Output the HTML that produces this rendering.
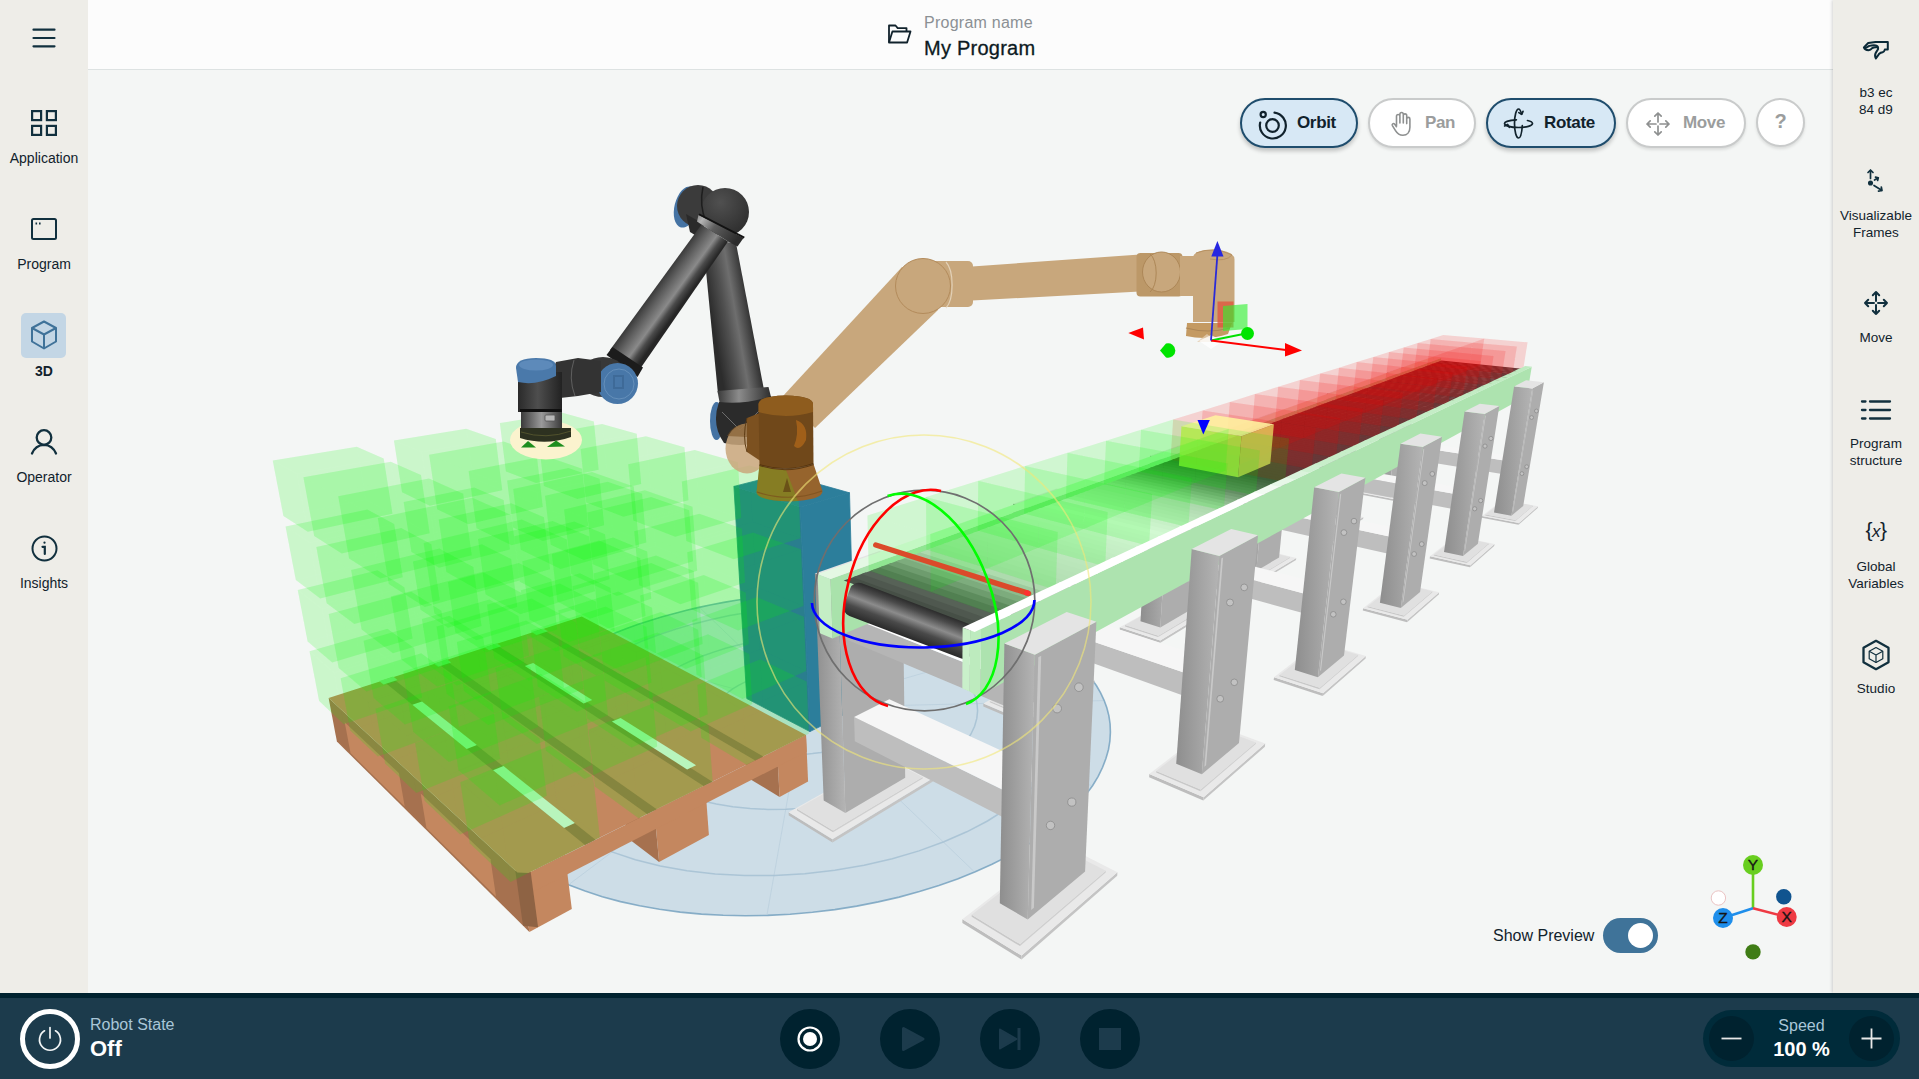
<!DOCTYPE html>
<html lang="en"><head><meta charset="utf-8"><title>My Program - 3D</title>
<style>
*{box-sizing:border-box;margin:0;padding:0}
html,body{width:1919px;height:1079px;overflow:hidden;background:#F4F6F5;font-family:"Liberation Sans",sans-serif;color:#11222C}
#app{position:relative;width:1919px;height:1079px;overflow:hidden}
#left{position:absolute;left:0;top:0;width:88px;height:993px;background:#EEEDE8}
#right{position:absolute;left:1833px;top:0;width:86px;height:993px;background:#EEEDE8;box-shadow:-1px 0 3px rgba(0,0,0,.16)}
#head{position:absolute;left:88px;top:0;width:1745px;height:70px;background:#FCFCFC;border-bottom:1px solid #DDE2E2}
#view{position:absolute;left:88px;top:70px;width:1745px;height:923px;background:#F4F6F5;overflow:hidden}
#bot{position:absolute;left:0;top:993px;width:1919px;height:86px;background:#1C3B4C;border-top:5px solid #00222F}
.nav{position:absolute;left:0;width:88px;text-align:center;font-size:14px;line-height:16px;color:#11222C}
.nav svg{display:block;margin:0 auto}
.rnav{position:absolute;left:0;width:86px;text-align:center;font-size:13.5px;line-height:16.5px;color:#11222C}
.ic{position:absolute}
.btn{position:absolute;top:28px;height:50px;border-radius:25px;border:2px solid #C9CBCB;background:#fff;font-weight:bold;font-size:17px;letter-spacing:-.35px;color:#9B9D9D;box-shadow:0 2px 3px rgba(0,0,0,.10)}
.btn.on{background:#D7E8F5;border-color:#1F4D6D;color:#11222C;box-shadow:0 3px 4px rgba(0,0,0,.22)}
.btn span{position:absolute;top:13px;line-height:20px}
.btn svg{position:absolute}
.cbtn{position:absolute;top:11px;width:60px;height:60px;border-radius:30px;background:#00222F}
</style></head><body><div id="app">
<div id="view">
<svg id="scene" style="position:absolute;left:0;top:0" width="1745" height="923" viewBox="0 0 1745 923"><defs>
<linearGradient id="gLegL" x1="0" x2="1" y1="0" y2="0"><stop offset="0" stop-color="#8E8E8E"/><stop offset="1" stop-color="#B4B4B4"/></linearGradient>
<linearGradient id="gBelt" gradientUnits="userSpaceOnUse" x1="770" y1="520" x2="1000" y2="560"><stop offset="0" stop-color="#4C7C4C"/><stop offset=".55" stop-color="#8EBB8E"/><stop offset="1" stop-color="#3E6E3E"/></linearGradient>
<linearGradient id="gRoll" x1="0" x2="0" y1="0" y2="1"><stop offset="0" stop-color="#2C2C2C"/><stop offset=".18" stop-color="#4A4A4A"/><stop offset=".45" stop-color="#8C8C8C"/><stop offset=".7" stop-color="#4A4A4A"/><stop offset="1" stop-color="#2A2A2A"/></linearGradient>
<linearGradient id="gTubeF" gradientUnits="userSpaceOnUse" x1="655.700" y1="287.200" x2="681" y2="305.500"><stop offset="0" stop-color="#3A3A3A"/><stop offset=".3" stop-color="#626262"/><stop offset=".62" stop-color="#8A8A8A"/><stop offset=".8" stop-color="#4A4A4A"/><stop offset="1" stop-color="#262626"/></linearGradient>
<linearGradient id="gTubeU" gradientUnits="userSpaceOnUse" x1="712" y1="320" x2="752" y2="313"><stop offset="0" stop-color="#2C2C2C"/><stop offset=".35" stop-color="#505050"/><stop offset=".6" stop-color="#6E6E6E"/><stop offset="1" stop-color="#2A2A2A"/></linearGradient>
<linearGradient id="gCollar" x1="0" x2="1" y1="0" y2="0"><stop offset="0" stop-color="#3A3A3A"/><stop offset=".4" stop-color="#8C8C8C"/><stop offset="1" stop-color="#2E2E2E"/></linearGradient>
<linearGradient id="gCollar2" x1="0" x2="1" y1="0" y2=".5"><stop offset="0" stop-color="#8A8A8A"/><stop offset=".15" stop-color="#B5B5B5"/><stop offset=".45" stop-color="#5E5E5E"/><stop offset="1" stop-color="#2C2C2C"/></linearGradient>
<radialGradient id="gJoint" cx=".4" cy=".3" r=".8"><stop offset="0" stop-color="#505050"/><stop offset="1" stop-color="#2B2B2B"/></radialGradient>
<linearGradient id="gCylH" x1="0" x2="1" y1="0" y2="0"><stop offset="0" stop-color="#2A2A2A"/><stop offset=".45" stop-color="#4E4E4E"/><stop offset=".7" stop-color="#3A3A3A"/><stop offset="1" stop-color="#222"/></linearGradient>
<linearGradient id="gCylS" x1="0" x2="1" y1="0" y2="0"><stop offset="0" stop-color="#3A3A3A"/><stop offset=".5" stop-color="#9A9A9A"/><stop offset="1" stop-color="#3A3A3A"/></linearGradient>
<linearGradient id="gLegR" x1="0" x2="1" y1="0" y2="0"><stop offset="0" stop-color="#A2A2A2"/><stop offset="1" stop-color="#B2B2B2"/></linearGradient>
</defs>
<polygon points="908.3,547.1 898.0,543.7 887.5,540.5 876.8,537.6 865.9,535.0 854.7,532.6 843.4,530.5 831.9,528.6 820.3,527.0 808.5,525.7 796.6,524.5 784.6,523.7 772.5,523.1 760.3,522.7 748.0,522.5 735.7,522.7 723.3,523.0 710.8,523.6 698.3,524.5 685.8,525.6 673.3,526.9 660.8,528.5 648.2,530.3 635.8,532.4 623.3,534.8 610.9,537.4 598.6,540.3 586.4,543.4 574.2,546.8 562.2,550.4 550.3,554.3 538.6,558.5 527.1,562.9 515.7,567.7 504.6,572.6 493.8,577.9 483.2,583.4 473.0,589.3 463.1,595.3 453.6,601.7 444.4,608.3 435.8,615.2 427.6,622.3 420.0,629.7 413.0,637.3 406.6,645.2 400.8,653.3 395.8,661.6 391.6,670.1 388.2,678.7 385.6,687.6 384.0,696.5 383.4,705.6 383.8,714.7 385.2,723.8 387.8,733.0 391.6,742.1 396.5,751.2 402.7,760.1 410.1,768.9 418.8,777.4 428.7,785.7 439.9,793.6 452.4,801.2 466.1,808.3 481.1,815.0 497.1,821.1 514.3,826.7 532.5,831.6 551.6,835.8 571.5,839.3 592.2,842.1 613.4,844.1 635.2,845.3 657.3,845.8 679.7,845.4 702.1,844.2 724.5,842.3 746.8,839.6 768.7,836.1 790.2,831.9 811.1,827.1 831.4,821.6 850.9,815.5 869.5,808.9 887.3,801.8 904.0,794.3 919.7,786.4 934.3,778.1 947.8,769.6 960.2,760.9 971.4,752.0 981.4,742.9 990.3,733.8 998.0,724.6 1004.7,715.5 1010.2,706.3 1014.6,697.3 1018.0,688.3 1020.5,679.5 1021.9,670.8 1022.4,662.3 1022.1,654.0 1020.9,645.9 1018.9,638.0 1016.1,630.3 1012.6,622.9 1008.5,615.8 1003.7,608.9 998.2,602.2 992.3,595.9 985.8,589.8 978.8,583.9 971.3,578.4 963.4,573.1 955.1,568.1 946.4,563.3 937.3,558.9 927.9,554.7 918.2,550.7" fill="rgba(150,186,212,0.42)" stroke="#6F9DBD" stroke-width="1.6" stroke-opacity=".8"/><polygon points="779.9,607.5 774.7,605.3 769.1,603.4 763.2,601.8 756.9,600.5 750.4,599.4 743.7,598.6 736.8,598.0 729.8,597.8 722.6,597.8 715.5,598.1 708.3,598.7 701.1,599.5 694.0,600.7 687.0,602.1 680.2,603.7 673.6,605.6 667.3,607.8 661.2,610.2 655.4,612.8 650.1,615.6 645.1,618.7 640.6,621.9 636.6,625.2 633.2,628.7 630.3,632.4 628.0,636.1 626.4,639.8 625.4,643.7 625.1,647.5 625.5,651.3 626.7,655.1 628.5,658.7 631.1,662.3 634.4,665.7 638.3,668.9 643.0,671.9 648.3,674.7 654.2,677.1 660.6,679.3 667.6,681.1 675.0,682.6 682.7,683.8 690.8,684.5 699.1,684.9 707.5,684.9 716.0,684.4 724.5,683.6 732.9,682.4 741.1,680.9 749.0,679.0 756.6,676.8 763.8,674.3 770.5,671.5 776.8,668.4 782.4,665.2 787.5,661.8 791.9,658.2 795.7,654.5 798.8,650.7 801.2,646.9 802.9,643.1 804.0,639.3 804.3,635.5 804.0,631.8 803.0,628.2 801.4,624.7 799.2,621.4 796.4,618.2 793.0,615.2 789.1,612.4 784.7,609.8" fill="none" stroke="#8FB1C8" stroke-width="1.5" stroke-opacity=".55"/><polygon points="835.1,581.5 825.0,577.8 814.3,574.5 803.0,571.7 791.4,569.4 779.3,567.5 766.9,566.1 754.3,565.2 741.4,564.7 728.4,564.8 715.2,565.3 702.1,566.3 688.9,567.7 675.9,569.7 662.9,572.1 650.2,575.0 637.7,578.3 625.6,582.1 613.8,586.3 602.6,591.0 591.9,596.1 581.8,601.6 572.5,607.5 563.9,613.8 556.3,620.4 549.6,627.3 544.0,634.5 539.5,642.0 536.3,649.6 534.4,657.3 533.9,665.2 534.9,673.0 537.4,680.7 541.4,688.4 547.0,695.7 554.3,702.8 563.1,709.5 573.4,715.7 585.2,721.4 598.4,726.4 612.8,730.6 628.3,734.1 644.8,736.8 662.1,738.5 679.9,739.4 698.1,739.3 716.4,738.3 734.6,736.4 752.5,733.7 769.9,730.0 786.6,725.7 802.3,720.6 817.1,714.8 830.7,708.5 843.0,701.8 853.9,694.7 863.4,687.2 871.4,679.6 878.0,671.8 883.0,664.0 886.6,656.2 888.8,648.4 889.6,640.8 889.0,633.4 887.2,626.3 884.2,619.4 880.0,612.8 874.8,606.6 868.5,600.8 861.4,595.3 853.4,590.3 844.6,585.7" fill="none" stroke="#8FB1C8" stroke-width="1.5" stroke-opacity=".55"/><polygon points="884.7,558.2 869.8,553.2 854.3,548.8 838.2,545.1 821.6,542.0 804.6,539.6 787.2,537.8 769.5,536.6 751.5,536.0 733.3,536.0 715.1,536.7 696.7,538.0 678.3,539.9 659.9,542.5 641.6,545.6 623.5,549.4 605.6,553.9 588.1,559.0 570.9,564.7 554.2,571.0 538.1,578.1 522.7,585.7 508.1,594.0 494.4,602.9 481.8,612.3 470.4,622.4 460.4,633.0 451.9,644.1 445.1,655.6 440.2,667.5 437.4,679.7 436.7,692.1 438.4,704.6 442.7,717.1 449.5,729.3 459.1,741.2 471.4,752.6 486.5,763.4 504.2,773.3 524.6,782.1 547.4,789.7 572.3,796.0 599.0,800.8 627.3,804.1 656.6,805.6 686.6,805.5 716.8,803.7 746.8,800.2 776.1,795.2 804.3,788.7 831.0,780.9 855.9,771.8 878.8,761.8 899.5,751.0 917.8,739.5 933.5,727.5 946.8,715.2 957.5,702.8 965.7,690.3 971.6,677.9 975.1,665.8 976.4,653.9 975.7,642.4 973.1,631.4 968.7,620.9 962.6,610.9 955.0,601.5 946.0,592.7 935.8,584.5 924.5,577.0 912.1,570.1 898.8,563.8" fill="none" stroke="#8FB1C8" stroke-width="1.5" stroke-opacity=".55"/><path d="M763.3 601.9L854.6 533.1" stroke="#A9C3D4" stroke-width="1" stroke-opacity=".4"/><path d="M722.8 597.8L736.0 523.0" stroke="#A9C3D4" stroke-width="1" stroke-opacity=".4"/><path d="M680.4 603.7L611.7 537.6" stroke="#A9C3D4" stroke-width="1" stroke-opacity=".4"/><path d="M645.2 618.6L495.0 577.9" stroke="#A9C3D4" stroke-width="1" stroke-opacity=".4"/><path d="M626.4 639.8L408.1 644.9" stroke="#A9C3D4" stroke-width="1" stroke-opacity=".4"/><path d="M631.0 662.2L389.3 732.2" stroke="#A9C3D4" stroke-width="1" stroke-opacity=".4"/><path d="M660.5 679.3L481.8 813.8" stroke="#A9C3D4" stroke-width="1" stroke-opacity=".4"/><path d="M707.4 684.9L679.1 844.2" stroke="#A9C3D4" stroke-width="1" stroke-opacity=".4"/><path d="M756.4 676.8L885.7 801.2" stroke="#A9C3D4" stroke-width="1" stroke-opacity=".4"/><path d="M791.9 658.3L1003.1 715.4" stroke="#A9C3D4" stroke-width="1" stroke-opacity=".4"/><path d="M804.3 635.6L1015.0 630.6" stroke="#A9C3D4" stroke-width="1" stroke-opacity=".4"/><path d="M793.1 615.3L954.5 568.5" stroke="#A9C3D4" stroke-width="1" stroke-opacity=".4"/>
<polygon points="645.9,416.4 712.4,436.9 721.9,661.6 658.8,628.6" fill="#2A7E8E" stroke="#2A7E8E" stroke-width=".8"/><polygon points="712.4,436.9 761.5,422.8 767.5,639.0 721.9,661.6" fill="#2C7E9B" stroke="#2C7E9B" stroke-width=".8"/><polygon points="645.9,416.4 694.7,404.0 761.5,422.8 712.4,436.9" fill="#2C7E9B" stroke="#2C7E9B" stroke-width=".8"/>
<polygon points="1272.7,422.8 1305.2,429.0 1305.0,430.8 1272.5,424.6" fill="#BDBDBD" /><polygon points="1305.2,429.0 1329.0,414.6 1328.8,416.3 1305.0,430.8" fill="#C4C4C4" /><polygon points="1272.7,422.8 1297.5,409.0 1329.0,414.6 1305.2,429.0" fill="#E9E9E9" /><polygon points="1276.1,421.5 1302.8,426.5 1302.7,427.4 1276.0,422.4" fill="#C8C8C8" /><polygon points="1302.8,426.5 1324.1,413.8 1324.0,414.7 1302.7,427.4" fill="#CFCFCF" /><polygon points="1276.1,421.5 1298.1,409.1 1324.1,413.8 1302.8,426.5" fill="#E0E0E0" /><polygon points="1299.4,302.2 1316.1,304.1 1300.9,422.8 1284.9,419.8" fill="url(#gLegL)" /><polygon points="1316.1,304.1 1330.6,298.8 1315.3,414.3 1300.9,422.8" fill="#ADADAD" /><polygon points="1299.4,302.2 1314.2,297.0 1330.6,298.8 1316.1,304.1" fill="#E4E4E4" /><polygon points="1309.6,374.0 1416.2,390.6 1414.1,404.1 1308.0,386.7" fill="#BEBEBE" /><polygon points="1309.6,374.0 1317.9,369.9 1423.1,385.9 1416.2,390.6" fill="#F6F6F6" /><polygon points="1210.9,457.3 1245.8,465.0 1245.6,467.0 1210.7,459.3" fill="#BDBDBD" /><polygon points="1245.8,465.0 1275.3,447.1 1275.1,449.0 1245.6,467.0" fill="#C4C4C4" /><polygon points="1210.9,457.3 1241.5,440.2 1275.3,447.1 1245.8,465.0" fill="#E9E9E9" /><polygon points="1214.7,455.8 1243.4,462.1 1243.3,463.1 1214.6,456.8" fill="#C8C8C8" /><polygon points="1243.4,462.1 1269.9,446.3 1269.8,447.2 1243.3,463.1" fill="#CFCFCF" /><polygon points="1214.7,455.8 1242.0,440.5 1269.9,446.3 1243.4,462.1" fill="#E0E0E0" /><polygon points="1239.0,323.5 1257.0,325.8 1242.2,457.4 1225.1,453.7" fill="url(#gLegL)" /><polygon points="1257.0,325.8 1275.1,319.2 1260.1,446.8 1242.2,457.4" fill="#ADADAD" /><polygon points="1239.0,323.5 1257.5,317.0 1275.1,319.2 1257.0,325.8" fill="#E4E4E4" /><polygon points="1251.4,403.3 1367.0,424.1 1364.8,439.1 1249.8,417.3" fill="#BEBEBE" /><polygon points="1251.4,403.3 1261.7,398.1 1375.7,418.2 1367.0,424.1" fill="#F6F6F6" /><polygon points="1133.0,500.8 1170.6,510.7 1170.3,512.9 1132.8,503.0" fill="#BDBDBD" /><polygon points="1170.6,510.7 1208.2,487.9 1208.0,490.0 1170.3,512.9" fill="#C4C4C4" /><polygon points="1133.0,500.8 1171.9,479.1 1208.2,487.9 1170.6,510.7" fill="#E9E9E9" /><polygon points="1137.4,499.0 1168.3,507.1 1168.2,508.2 1137.3,500.1" fill="#C8C8C8" /><polygon points="1168.3,507.1 1202.0,486.9 1201.9,488.0 1168.2,508.2" fill="#CFCFCF" /><polygon points="1137.4,499.0 1172.0,479.7 1202.0,486.9 1168.3,507.1" fill="#E0E0E0" /><polygon points="1162.4,350.4 1181.8,353.4 1168.3,500.9 1149.8,496.2" fill="url(#gLegL)" /><polygon points="1181.8,353.4 1205.0,344.9 1191.1,487.5 1168.3,500.9" fill="#ADADAD" /><polygon points="1162.4,350.4 1186.0,342.1 1205.0,344.9 1181.8,353.4" fill="#E4E4E4" /><polygon points="1177.9,440.2 1303.7,467.1 1301.5,484.0 1176.5,455.9" fill="#BEBEBE" /><polygon points="1177.9,440.2 1191.0,433.6 1315.1,459.4 1303.7,467.1" fill="#F6F6F6" /><polygon points="1031.9,557.3 1072.2,570.4 1072.0,572.9 1031.7,559.7" fill="#BDBDBD" /><polygon points="1072.2,570.4 1121.8,540.3 1121.6,542.7 1072.0,572.9" fill="#C4C4C4" /><polygon points="1031.9,557.3 1082.8,528.9 1121.8,540.3 1072.2,570.4" fill="#E9E9E9" /><polygon points="1037.2,555.1 1070.3,565.8 1070.2,567.1 1037.1,556.4" fill="#C8C8C8" /><polygon points="1070.3,565.8 1114.7,539.2 1114.6,540.4 1070.2,567.1" fill="#CFCFCF" /><polygon points="1037.2,555.1 1082.5,529.8 1114.7,539.2 1070.3,565.8" fill="#E0E0E0" /><polygon points="1062.1,385.7 1083.1,389.7 1072.3,557.5 1052.5,551.3" fill="url(#gLegL)" /><polygon points="1083.1,389.7 1114.0,378.3 1102.2,539.9 1072.3,557.5" fill="#ADADAD" /><polygon points="1062.1,385.7 1093.5,374.6 1114.0,378.3 1083.1,389.7" fill="#E4E4E4" /><polygon points="1082.2,488.3 1219.5,524.4 1217.4,543.8 1081.0,506.1" fill="#BEBEBE" /><polygon points="1082.2,488.3 1099.5,479.6 1234.9,513.9 1219.5,524.4" fill="#F6F6F6" /><polygon points="895.3,633.5 938.0,651.7 938.0,654.7 895.3,636.4" fill="#BDBDBD" /><polygon points="938.0,651.7 1006.5,610.2 1006.4,612.9 938.0,654.7" fill="#C4C4C4" /><polygon points="895.3,633.5 964.8,594.7 1006.5,610.2 938.0,651.7" fill="#E9E9E9" /><polygon points="901.8,630.9 936.9,645.7 936.9,647.1 901.8,632.3" fill="#C8C8C8" /><polygon points="936.9,645.7 998.1,609.0 998.0,610.4 936.9,647.1" fill="#CFCFCF" /><polygon points="901.8,630.9 963.7,596.2 998.1,609.0 936.9,645.7" fill="#E0E0E0" /><polygon points="925.2,433.8 947.5,439.5 942.5,634.0 921.5,625.4" fill="url(#gLegL)" /><polygon points="947.5,439.5 990.7,423.6 983.5,609.8 942.5,634.0" fill="#ADADAD" /><polygon points="925.2,433.8 968.7,418.5 990.7,423.6 947.5,439.5" fill="#E4E4E4" /><polygon points="952.3,553.5 1101.6,604.6 1099.9,627.2 951.7,574.1" fill="#BEBEBE" /><polygon points="952.3,553.5 976.2,541.5 1123.6,589.6 1101.6,604.6" fill="#F6F6F6" /><polygon points="700.6,742.2 744.4,769.2 744.5,772.6 700.8,745.6" fill="#BDBDBD" /><polygon points="744.4,769.2 844.9,708.3 844.9,711.4 744.5,772.6" fill="#C4C4C4" /><polygon points="700.6,742.2 801.2,686.1 844.9,708.3 744.4,769.2" fill="#E9E9E9" /><polygon points="709.0,738.8 745.0,760.6 745.1,762.3 709.0,740.4" fill="#C8C8C8" /><polygon points="745.0,760.6 834.6,707.0 834.6,708.6 745.1,762.3" fill="#CFCFCF" /><polygon points="709.0,738.8 798.7,688.6 834.6,707.0 745.0,760.6" fill="#E0E0E0" /><polygon points="726.9,503.6 750.0,512.1 757.4,743.1 735.7,730.5" fill="url(#gLegL)" /><polygon points="750.0,512.1 814.4,488.4 817.2,707.8 757.4,743.1" fill="#ADADAD" /><polygon points="726.9,503.6 791.4,480.9 814.4,488.4 750.0,512.1" fill="#E4E4E4" /><polygon points="766.1,647.0 924.9,724.7 924.4,751.9 766.8,671.3" fill="#BEBEBE" /><polygon points="766.1,647.0 801.3,629.3 959.1,701.5 924.9,724.7" fill="#F6F6F6" />
<polygon points="756.5,544.9 921.0,610.3 920.5,637.6 757.3,569.1" fill="#B5B5B5" /><polygon points="756.5,544.9 778.6,536.1 942.5,598.5 921.0,610.3" fill="#FFFFFF" /><polygon points="729.6,504.1 742.5,508.9 744.6,568.6 731.8,563.2" fill="#C4EEC5" /><polygon points="742.5,508.9 1353.2,287.9 1349.4,315.4 744.6,568.6" fill="#A9E2AB" /><polygon points="729.6,504.1 1344.3,287.0 1353.2,287.9 742.5,508.9" fill="#E4F8E4" /><polygon points="755.7,510.6 768.6,505.9 900.0,552.8 887.3,558.7" fill="rgb(70,79,70)" /><polygon points="764.8,507.3 777.4,502.6 908.6,548.6 896.3,554.5" fill="rgb(79,88,79)" /><polygon points="773.7,504.0 786.2,499.4 917.2,544.6 905.0,550.4" fill="rgb(87,98,87)" /><polygon points="782.5,500.7 794.7,496.3 925.5,540.7 913.6,546.3" fill="rgb(96,107,96)" /><polygon points="791.2,497.6 803.2,493.1 933.7,536.8 922.1,542.3" fill="rgb(110,122,110)" /><polygon points="799.6,494.4 811.5,490.1 941.8,533.0 930.3,538.4" fill="rgb(129,140,129)" /><polygon points="808.0,491.4 819.6,487.1 949.7,529.2 938.5,534.6" fill="rgb(147,159,147)" /><polygon points="816.2,488.3 827.6,484.1 957.5,525.6 946.4,530.8" fill="rgb(166,177,166)" /><polygon points="824.3,485.4 835.5,481.2 965.1,522.0 954.3,527.1" fill="rgb(185,195,185)" /><polygon points="832.2,482.4 843.3,478.4 972.6,518.4 961.9,523.5" fill="rgb(204,214,204)" /><polygon points="840.1,479.6 851.0,475.6 980.0,514.9 969.5,519.9" fill="rgb(207,217,207)" /><polygon points="847.8,476.7 858.5,472.8 987.2,511.5 976.9,516.4" fill="rgb(209,219,209)" /><polygon points="855.3,473.9 865.9,470.1 994.3,508.1 984.2,512.9" fill="rgb(212,221,212)" /><polygon points="862.8,471.2 873.2,467.4 1001.3,504.8 991.4,509.5" fill="rgb(214,222,214)" /><polygon points="870.2,468.5 880.4,464.7 1008.2,501.6 998.4,506.2" fill="rgb(216,224,216)" /><polygon points="877.4,465.8 887.5,462.1 1015.0,498.4 1005.3,503.0" fill="rgb(218,226,218)" /><polygon points="884.5,463.2 894.4,459.6 1021.6,495.3 1012.1,499.7" fill="rgb(221,228,221)" /><polygon points="891.5,460.6 901.3,457.0 1028.1,492.2 1018.8,496.6" fill="rgb(223,230,223)" /><polygon points="898.4,458.1 908.1,454.5 1034.6,489.1 1025.4,493.5" fill="rgb(225,232,225)" /><polygon points="905.2,455.6 914.7,452.1 1040.9,486.2 1031.9,490.4" fill="rgb(227,234,227)" /><polygon points="911.9,453.1 921.3,449.7 1047.1,483.2 1038.2,487.4" fill="rgb(230,236,230)" /><polygon points="918.5,450.7 927.8,447.3 1053.2,480.3 1044.5,484.4" fill="rgb(232,237,232)" /><polygon points="925.1,448.3 934.1,445.0 1059.2,477.5 1050.7,481.5" fill="rgb(234,239,234)" /><polygon points="931.5,445.9 940.4,442.6 1065.2,474.7 1056.7,478.7" fill="rgb(237,241,237)" /><polygon points="937.8,443.6 946.6,440.4 1071.0,471.9 1062.7,475.8" fill="rgb(239,243,239)" /><polygon points="944.0,441.3 952.7,438.1 1076.7,469.2 1068.6,473.1" fill="rgb(241,245,241)" /><polygon points="950.2,439.0 958.7,435.9 1082.4,466.5 1074.3,470.3" fill="rgb(243,247,243)" /><polygon points="956.2,436.8 964.7,433.7 1088.0,463.9 1080.0,467.6" fill="rgb(246,249,246)" /><polygon points="962.2,434.6 970.5,431.6 1093.4,461.3 1085.6,465.0" fill="rgb(242,246,242)" /><polygon points="968.1,432.5 976.3,429.4 1098.8,458.8 1091.2,462.4" fill="rgb(238,242,238)" /><polygon points="973.9,430.3 982.0,427.3 1104.2,456.2 1096.6,459.8" fill="rgb(234,238,234)" /><polygon points="979.6,428.2 987.6,425.3 1109.4,453.8 1102.0,457.3" fill="rgb(229,234,229)" /><polygon points="985.3,426.1 993.2,423.2 1114.6,451.3 1107.2,454.8" fill="rgb(225,230,225)" /><polygon points="990.9,424.1 998.6,421.2 1119.7,448.9 1112.4,452.3" fill="rgb(220,226,220)" /><polygon points="996.4,422.0 1004.0,419.2 1124.7,446.6 1117.5,449.9" fill="rgb(216,222,216)" /><polygon points="1001.8,420.1 1009.4,417.3 1129.6,444.2 1122.6,447.5" fill="rgb(212,218,212)" /><polygon points="1007.1,418.1 1014.6,415.3 1134.5,441.9 1127.6,445.2" fill="rgb(207,215,207)" /><polygon points="1012.4,416.1 1019.8,413.4 1139.3,439.6 1132.5,442.9" fill="rgb(203,211,203)" /><polygon points="1017.6,414.2 1024.9,411.5 1144.0,437.4 1137.3,440.6" fill="rgb(196,204,196)" /><polygon points="1022.8,412.3 1030.0,409.7 1148.7,435.2 1142.1,438.3" fill="rgb(183,190,183)" /><polygon points="1027.9,410.5 1035.0,407.8 1153.3,433.0 1146.8,436.1" fill="rgb(170,177,170)" /><polygon points="1032.9,408.6 1039.9,406.0 1157.8,430.9 1151.4,433.9" fill="rgb(157,164,157)" /><polygon points="1037.8,406.8 1044.8,404.2 1162.3,428.8 1156.0,431.8" fill="rgb(144,151,144)" /><polygon points="1042.7,405.0 1049.6,402.5 1166.7,426.7 1160.5,429.6" fill="rgb(131,138,131)" /><polygon points="1047.6,403.2 1054.3,400.7 1171.1,424.6 1164.9,427.5" fill="rgb(118,124,118)" /><polygon points="1052.3,401.5 1059.0,399.0 1175.4,422.6 1169.3,425.5" fill="rgb(108,113,108)" /><polygon points="1057.0,399.7 1063.6,397.3 1179.6,420.6 1173.6,423.4" fill="rgb(101,106,101)" /><polygon points="1061.7,398.0 1068.2,395.6 1183.8,418.6 1177.9,421.4" fill="rgb(95,99,94)" /><polygon points="1066.3,396.3 1072.7,394.0 1188.0,416.6 1182.1,419.4" fill="rgb(89,92,87)" /><polygon points="1070.8,394.6 1077.2,392.3 1192.0,414.7 1186.2,417.5" fill="rgb(83,85,80)" /><polygon points="1075.3,393.0 1081.6,390.7 1196.1,412.8 1190.3,415.5" fill="rgb(76,78,73)" /><polygon points="1079.7,391.4 1085.9,389.1 1200.0,410.9 1194.4,413.6" fill="rgb(70,70,66)" /><polygon points="1084.1,389.8 1090.2,387.5 1203.9,409.1 1198.4,411.7" fill="rgb(66,66,62)" /><polygon points="1088.4,388.2 1094.5,385.9 1207.8,407.3 1202.3,409.9" fill="rgb(68,66,63)" /><polygon points="1092.7,386.6 1098.7,384.4 1211.6,405.5 1206.2,408.0" fill="rgb(69,66,63)" /><polygon points="1096.9,385.0 1102.8,382.9 1215.4,403.7 1210.0,406.2" fill="rgb(70,66,63)" /><polygon points="1101.1,383.5 1106.9,381.4 1219.1,401.9 1213.8,404.4" fill="rgb(71,66,64)" /><polygon points="1105.2,382.0 1111.0,379.9 1222.8,400.2 1217.6,402.6" fill="rgb(72,66,64)" /><polygon points="1109.3,380.5 1115.0,378.4 1226.4,398.5 1221.3,400.9" fill="rgb(73,66,64)" /><polygon points="1113.3,379.0 1119.0,376.9 1230.0,396.8 1224.9,399.2" fill="rgb(74,66,65)" /><polygon points="1117.3,377.5 1122.9,375.5 1233.6,395.1 1228.5,397.5" fill="rgb(76,66,65)" /><polygon points="1121.2,376.1 1126.8,374.1 1237.1,393.4 1232.1,395.8" fill="rgb(77,66,66)" /><polygon points="1125.1,374.7 1130.6,372.6 1240.5,391.8 1235.6,394.1" fill="rgb(78,66,66)" /><polygon points="1129.0,373.2 1134.4,371.3 1244.0,390.2 1239.1,392.5" fill="rgb(78,66,66)" /><polygon points="1132.8,371.8 1138.1,369.9 1247.3,388.6 1242.5,390.9" fill="rgb(78,66,66)" /><polygon points="1136.6,370.4 1141.8,368.5 1250.7,387.0 1245.9,389.3" fill="rgb(78,66,66)" /><polygon points="1140.3,369.1 1145.5,367.2 1254.0,385.4 1249.3,387.7" fill="rgb(78,66,66)" /><polygon points="1144.0,367.7 1149.1,365.8 1257.2,383.9 1252.6,386.1" fill="rgb(78,66,66)" /><polygon points="1147.6,366.4 1152.7,364.5 1260.5,382.4 1255.9,384.6" fill="rgb(78,66,66)" /><polygon points="1151.2,365.1 1156.3,363.2 1263.6,380.9 1259.1,383.0" fill="rgb(78,66,66)" /><polygon points="1154.8,363.7 1159.8,361.9 1266.8,379.4 1262.3,381.5" fill="rgb(78,66,66)" /><polygon points="1158.3,362.4 1163.2,360.6 1269.9,377.9 1265.5,380.0" fill="rgb(78,66,66)" /><polygon points="1161.8,361.2 1166.7,359.4 1273.0,376.5 1268.6,378.5" fill="rgb(78,66,66)" /><polygon points="1165.2,359.9 1170.1,358.1 1276.0,375.0 1271.7,377.1" fill="rgb(79,66,66)" /><polygon points="1168.7,358.6 1173.4,356.9 1279.0,373.6 1274.8,375.6" fill="rgb(79,66,66)" /><polygon points="1172.0,357.4 1176.8,355.7 1282.0,372.2 1277.8,374.2" fill="rgb(79,66,66)" /><polygon points="1175.4,356.2 1180.1,354.4 1284.9,370.8 1280.8,372.8" fill="rgb(79,66,66)" /><polygon points="1178.7,354.9 1183.3,353.2 1287.9,369.4 1283.7,371.4" fill="rgb(79,66,66)" /><polygon points="1182.0,353.7 1186.5,352.1 1290.7,368.1 1286.6,370.0" fill="rgb(79,66,66)" /><polygon points="1185.2,352.5 1189.7,350.9 1293.6,366.7 1289.5,368.6" fill="rgb(79,66,66)" /><polygon points="1188.4,351.4 1192.9,349.7 1296.4,365.4 1292.4,367.3" fill="rgb(79,66,66)" /><polygon points="1191.6,350.2 1196.0,348.6 1299.2,364.1 1295.2,366.0" fill="rgb(79,66,66)" /><polygon points="1194.7,349.0 1199.1,347.4 1301.9,362.8 1298.0,364.6" fill="rgb(79,66,66)" /><polygon points="1197.8,347.9 1202.2,346.3 1304.7,361.5 1300.8,363.3" fill="rgb(79,66,66)" /><polygon points="1200.9,346.8 1205.2,345.2 1307.3,360.2 1303.5,362.0" fill="rgb(79,66,66)" /><polygon points="1204.0,345.6 1208.2,344.1 1310.0,359.0 1306.2,360.8" fill="rgb(79,66,66)" /><polygon points="1207.0,344.5 1211.2,343.0 1312.7,357.7 1308.9,359.5" fill="rgb(79,66,66)" /><polygon points="1210.0,343.4 1214.2,341.9 1315.3,356.5 1311.5,358.2" fill="rgb(79,66,66)" /><polygon points="1212.9,342.3 1217.1,340.8 1317.8,355.3 1314.2,357.0" fill="rgb(79,66,66)" /><polygon points="1215.9,341.3 1220.0,339.8 1320.4,354.1 1316.8,355.8" fill="rgb(79,66,66)" /><polygon points="1218.8,340.2 1222.8,338.7 1322.9,352.9 1319.3,354.6" fill="rgb(79,66,66)" /><polygon points="1221.6,339.1 1225.7,337.7 1325.4,351.7 1321.9,353.4" fill="rgb(79,66,66)" /><polygon points="1224.5,338.1 1228.5,336.6 1327.9,350.5 1324.4,352.2" fill="rgb(79,66,66)" /><polygon points="1227.3,337.1 1231.2,335.6 1330.4,349.3 1326.9,351.0" fill="rgb(79,66,66)" /><polygon points="1230.1,336.0 1234.0,334.6 1332.8,348.2 1329.3,349.8" fill="rgb(79,66,66)" /><polygon points="1232.8,335.0 1236.7,333.6 1335.2,347.1 1331.8,348.7" fill="rgb(80,66,66)" /><polygon points="1235.6,334.0 1239.4,332.6 1337.6,345.9 1334.2,347.5" fill="rgb(80,66,66)" /><polygon points="1238.3,333.0 1242.1,331.6 1339.9,344.8 1336.6,346.4" fill="rgb(80,66,66)" /><polygon points="1241.0,332.0 1244.8,330.6 1342.3,343.7 1339.0,345.3" fill="rgb(80,66,66)" /><polygon points="1243.6,331.0 1247.4,329.7 1344.6,342.6 1341.3,344.2" fill="rgb(80,66,66)" /><polygon points="1246.3,330.1 1250.0,328.7 1346.9,341.6 1343.6,343.1" fill="rgb(80,66,66)" /><polygon points="1248.9,329.1 1252.6,327.8 1349.1,340.5 1345.9,342.0" fill="rgb(80,66,66)" /><polygon points="1251.5,328.2 1255.1,326.8 1351.4,339.4 1348.2,340.9" fill="rgb(80,66,66)" /><polygon points="1254.1,327.2 1257.6,325.9 1353.6,338.4 1350.4,339.9" fill="rgb(80,66,66)" /><polygon points="1256.6,326.3 1260.2,325.0 1355.8,337.3 1352.7,338.8" fill="rgb(80,66,66)" /><polygon points="1259.1,325.3 1262.6,324.0 1358.0,336.3 1354.9,337.8" fill="rgb(80,66,66)" /><polygon points="1261.6,324.4 1265.1,323.1 1360.1,335.3 1357.1,336.7" fill="rgb(80,66,66)" /><polygon points="1264.1,323.5 1267.5,322.2 1362.3,334.3 1359.2,335.7" fill="rgb(80,66,66)" /><polygon points="1266.5,322.6 1270.0,321.4 1364.4,333.3 1361.4,334.7" fill="rgb(80,66,66)" /><polygon points="1269.0,321.7 1272.4,320.5 1366.5,332.3 1363.5,333.7" fill="rgb(80,66,66)" /><polygon points="1271.4,320.8 1274.7,319.6 1368.6,331.3 1365.6,332.7" fill="rgb(80,66,66)" /><polygon points="1273.8,320.0 1277.1,318.7 1370.6,330.3 1367.7,331.7" fill="rgb(80,66,66)" /><polygon points="1276.1,319.1 1279.4,317.9 1372.7,329.4 1369.8,330.7" fill="rgb(80,66,66)" /><polygon points="1278.5,318.2 1281.8,317.0 1374.7,328.4 1371.8,329.8" fill="rgb(80,66,66)" /><polygon points="1280.8,317.4 1284.0,316.2 1376.7,327.5 1373.8,328.8" fill="rgb(80,66,66)" /><polygon points="1283.1,316.5 1286.3,315.3 1378.7,326.5 1375.9,327.9" fill="rgb(80,66,66)" /><polygon points="1285.4,315.7 1288.6,314.5 1380.6,325.6 1377.8,326.9" fill="rgb(80,66,66)" /><polygon points="1287.6,314.8 1290.8,313.7 1382.6,324.7 1379.8,326.0" fill="rgb(81,66,66)" /><polygon points="1289.9,314.0 1293.0,312.9 1384.5,323.8 1381.8,325.1" fill="rgb(81,66,66)" /><polygon points="1292.1,313.2 1295.2,312.1 1386.4,322.9 1383.7,324.1" fill="rgb(81,66,66)" /><polygon points="1294.3,312.4 1297.4,311.3 1388.3,322.0 1385.6,323.2" fill="rgb(81,66,66)" /><polygon points="1296.5,311.6 1299.6,310.5 1390.2,321.1 1387.5,322.3" fill="rgb(81,66,66)" /><polygon points="1298.7,310.8 1301.7,309.7 1392.1,320.2 1389.4,321.4" fill="rgb(81,66,66)" /><polygon points="1300.8,310.0 1303.8,308.9 1393.9,319.3 1391.3,320.6" fill="rgb(81,66,66)" /><polygon points="1303.0,309.2 1306.0,308.1 1395.7,318.5 1393.1,319.7" fill="rgb(81,66,66)" /><polygon points="1305.1,308.4 1308.0,307.3 1397.6,317.6 1395.0,318.8" fill="rgb(81,66,66)" /><polygon points="1307.2,307.7 1310.1,306.6 1399.4,316.7 1396.8,318.0" fill="rgb(81,66,66)" /><polygon points="1309.2,306.9 1312.2,305.8 1401.1,315.9 1398.6,317.1" fill="rgb(81,66,66)" /><polygon points="1311.3,306.1 1314.2,305.1 1402.9,315.1 1400.4,316.3" fill="rgb(81,66,66)" /><polygon points="1313.4,305.4 1316.2,304.3 1404.7,314.2 1402.2,315.4" fill="rgb(81,66,66)" /><polygon points="1315.4,304.6 1318.2,303.6 1406.4,313.4 1403.9,314.6" fill="rgb(81,66,66)" /><polygon points="1317.4,303.9 1320.2,302.9 1408.1,312.6 1405.7,313.8" fill="rgb(81,66,66)" /><polygon points="1319.4,303.2 1322.2,302.1 1409.8,311.8 1407.4,312.9" fill="rgb(81,66,66)" /><polygon points="1321.4,302.4 1324.2,301.4 1411.5,311.0 1409.1,312.1" fill="rgb(81,66,66)" /><polygon points="1323.3,301.7 1326.1,300.7 1413.2,310.2 1410.8,311.3" fill="rgb(81,66,66)" /><polygon points="1325.3,301.0 1328.0,300.0 1414.9,309.4 1412.5,310.5" fill="rgb(81,66,66)" /><polygon points="1327.2,300.3 1329.9,299.3 1416.5,308.6 1414.2,309.7" fill="rgb(81,66,66)" /><polygon points="1329.1,299.6 1331.8,298.6 1418.2,307.9 1415.8,309.0" fill="rgb(81,66,66)" /><polygon points="1331.0,298.9 1333.7,297.9 1419.8,307.1 1417.5,308.2" fill="rgb(81,66,66)" /><polygon points="1332.9,298.2 1335.6,297.2 1421.4,306.3 1419.1,307.4" fill="rgb(82,66,66)" /><polygon points="1334.8,297.5 1337.4,296.5 1423.0,305.6 1420.7,306.7" fill="rgb(82,66,66)" /><polygon points="1336.7,296.8 1339.3,295.8 1424.6,304.8 1422.3,305.9" fill="rgb(82,66,66)" /><polygon points="1338.5,296.1 1341.1,295.2 1426.1,304.1 1423.9,305.1" fill="rgb(82,66,66)" /><polygon points="1340.3,295.5 1342.9,294.5 1427.7,303.4 1425.5,304.4" fill="rgb(82,66,66)" /><polygon points="1342.2,294.8 1344.7,293.8 1429.2,302.6 1427.0,303.7" fill="rgb(82,66,66)" /><polygon points="1344.0,294.1 1346.5,293.2 1430.8,301.9 1428.6,302.9" fill="rgb(82,66,66)" /><polygon points="1345.7,293.5 1348.3,292.5 1432.3,301.2 1430.1,302.2" fill="rgb(82,66,66)" /><polygon points="1347.5,292.8 1350.0,291.9 1433.8,300.5 1431.7,301.5" fill="rgb(82,66,66)" /><polygon points="1349.3,292.2 1351.8,291.2 1435.3,299.8 1433.2,300.8" fill="rgb(82,66,66)" /><polygon points="1351.0,291.5 1353.5,290.6 1436.8,299.1 1434.7,300.1" fill="rgb(82,66,66)" /><g transform="translate(762.0,527.6) rotate(20.77)"><rect x="-3" y="-17.5" width="136.9" height="35" rx="9" fill="url(#gRoll)"/></g>
<polygon points="1342.7,268.9 1355.2,265.0 1351.6,291.0 1339.2,295.5" fill="#FF0000" fill-opacity="0.074"/><polygon points="1355.2,265.0 1396.3,268.6 1392.4,295.1 1351.6,291.0" fill="#FF0000" fill-opacity="0.074"/><polygon points="1339.2,295.5 1351.6,291.0 1392.4,295.1 1380.7,299.9" fill="#FF0000" fill-opacity="0.074"/><polygon points="1342.7,268.9 1384.7,272.7 1380.7,299.9 1339.2,295.5" fill="#FF0000" fill-opacity="0.074"/><polygon points="1384.7,272.7 1396.3,268.6 1392.4,295.1 1380.7,299.9" fill="#FF0000" fill-opacity="0.074"/><polygon points="1342.7,268.9 1355.2,265.0 1396.3,268.6 1384.7,272.7" fill="#FF0000" fill-opacity="0.074"/><polygon points="1384.7,272.7 1396.3,268.6 1392.4,295.1 1380.7,299.9" fill="#FF0000" fill-opacity="0.074"/><polygon points="1396.3,268.6 1439.6,272.3 1435.2,299.5 1392.4,295.1" fill="#FF0000" fill-opacity="0.074"/><polygon points="1380.7,299.9 1392.4,295.1 1435.2,299.5 1424.5,304.5" fill="#FF0000" fill-opacity="0.074"/><polygon points="1384.7,272.7 1428.9,276.6 1424.5,304.5 1380.7,299.9" fill="#FF0000" fill-opacity="0.074"/><polygon points="1428.9,276.6 1439.6,272.3 1435.2,299.5 1424.5,304.5" fill="#FF0000" fill-opacity="0.074"/><polygon points="1384.7,272.7 1396.3,268.6 1439.6,272.3 1428.9,276.6" fill="#FF0000" fill-opacity="0.074"/><polygon points="1329.6,273.0 1342.7,268.9 1339.2,295.5 1326.0,300.3" fill="#FF0000" fill-opacity="0.074"/><polygon points="1342.7,268.9 1384.7,272.7 1380.7,299.9 1339.2,295.5" fill="#FF0000" fill-opacity="0.074"/><polygon points="1326.0,300.3 1339.2,295.5 1380.7,299.9 1368.5,305.0" fill="#FF0000" fill-opacity="0.074"/><polygon points="1329.6,273.0 1372.4,277.0 1368.5,305.0 1326.0,300.3" fill="#FF0000" fill-opacity="0.074"/><polygon points="1372.4,277.0 1384.7,272.7 1380.7,299.9 1368.5,305.0" fill="#FF0000" fill-opacity="0.074"/><polygon points="1329.6,273.0 1342.7,268.9 1384.7,272.7 1372.4,277.0" fill="#FF0000" fill-opacity="0.074"/><polygon points="1372.4,277.0 1384.7,272.7 1380.7,299.9 1368.5,305.0" fill="#FF0000" fill-opacity="0.074"/><polygon points="1384.7,272.7 1428.9,276.6 1424.5,304.5 1380.7,299.9" fill="#FF0000" fill-opacity="0.074"/><polygon points="1368.5,305.0 1380.7,299.9 1424.5,304.5 1413.1,309.8" fill="#FF0000" fill-opacity="0.074"/><polygon points="1372.4,277.0 1417.6,281.1 1413.1,309.8 1368.5,305.0" fill="#FF0000" fill-opacity="0.074"/><polygon points="1417.6,281.1 1428.9,276.6 1424.5,304.5 1413.1,309.8" fill="#FF0000" fill-opacity="0.074"/><polygon points="1372.4,277.0 1384.7,272.7 1428.9,276.6 1417.6,281.1" fill="#FF0000" fill-opacity="0.074"/><polygon points="1315.7,277.4 1329.6,273.0 1326.0,300.3 1312.1,305.5" fill="#FF0000" fill-opacity="0.074"/><polygon points="1329.6,273.0 1372.4,277.0 1368.5,305.0 1326.0,300.3" fill="#FF0000" fill-opacity="0.074"/><polygon points="1312.1,305.5 1326.0,300.3 1368.5,305.0 1355.4,310.4" fill="#FF0000" fill-opacity="0.074"/><polygon points="1315.7,277.4 1359.4,281.6 1355.4,310.4 1312.1,305.5" fill="#FF0000" fill-opacity="0.074"/><polygon points="1359.4,281.6 1372.4,277.0 1368.5,305.0 1355.4,310.4" fill="#FF0000" fill-opacity="0.074"/><polygon points="1315.7,277.4 1329.6,273.0 1372.4,277.0 1359.4,281.6" fill="#FF0000" fill-opacity="0.074"/><polygon points="1359.4,281.6 1372.4,277.0 1368.5,305.0 1355.4,310.4" fill="#FF0000" fill-opacity="0.074"/><polygon points="1372.4,277.0 1417.6,281.1 1413.1,309.8 1368.5,305.0" fill="#FF0000" fill-opacity="0.074"/><polygon points="1355.4,310.4 1368.5,305.0 1413.1,309.8 1401.1,315.5" fill="#FF0000" fill-opacity="0.074"/><polygon points="1359.4,281.6 1405.6,286.0 1401.1,315.5 1355.4,310.4" fill="#FF0000" fill-opacity="0.074"/><polygon points="1405.6,286.0 1417.6,281.1 1413.1,309.8 1401.1,315.5" fill="#FF0000" fill-opacity="0.074"/><polygon points="1359.4,281.6 1372.4,277.0 1417.6,281.1 1405.6,286.0" fill="#FF0000" fill-opacity="0.074"/><polygon points="1301.0,282.0 1315.7,277.4 1312.1,305.5 1297.4,310.9" fill="#FF0000" fill-opacity="0.074"/><polygon points="1315.7,277.4 1359.4,281.6 1355.4,310.4 1312.1,305.5" fill="#FF0000" fill-opacity="0.074"/><polygon points="1297.4,310.9 1312.1,305.5 1355.4,310.4 1341.6,316.1" fill="#FF0000" fill-opacity="0.074"/><polygon points="1301.0,282.0 1345.6,286.4 1341.6,316.1 1297.4,310.9" fill="#FF0000" fill-opacity="0.074"/><polygon points="1345.6,286.4 1359.4,281.6 1355.4,310.4 1341.6,316.1" fill="#FF0000" fill-opacity="0.074"/><polygon points="1301.0,282.0 1315.7,277.4 1359.4,281.6 1345.6,286.4" fill="#FF0000" fill-opacity="0.074"/><polygon points="1345.6,286.4 1359.4,281.6 1355.4,310.4 1341.6,316.1" fill="#FF0000" fill-opacity="0.074"/><polygon points="1359.4,281.6 1405.6,286.0 1401.1,315.5 1355.4,310.4" fill="#FF0000" fill-opacity="0.074"/><polygon points="1341.6,316.1 1355.4,310.4 1401.1,315.5 1388.3,321.5" fill="#FF0000" fill-opacity="0.074"/><polygon points="1345.6,286.4 1392.9,291.1 1388.3,321.5 1341.6,316.1" fill="#FF0000" fill-opacity="0.074"/><polygon points="1392.9,291.1 1405.6,286.0 1401.1,315.5 1388.3,321.5" fill="#FF0000" fill-opacity="0.074"/><polygon points="1345.6,286.4 1359.4,281.6 1405.6,286.0 1392.9,291.1" fill="#FF0000" fill-opacity="0.074"/><polygon points="1285.3,286.9 1301.0,282.0 1297.4,310.9 1281.8,316.6" fill="#FF0000" fill-opacity="0.074"/><polygon points="1301.0,282.0 1345.6,286.4 1341.6,316.1 1297.4,310.9" fill="#FF0000" fill-opacity="0.074"/><polygon points="1281.8,316.6 1297.4,310.9 1341.6,316.1 1327.0,322.1" fill="#FF0000" fill-opacity="0.074"/><polygon points="1285.3,286.9 1331.0,291.6 1327.0,322.1 1281.8,316.6" fill="#FF0000" fill-opacity="0.074"/><polygon points="1331.0,291.6 1345.6,286.4 1341.6,316.1 1327.0,322.1" fill="#FF0000" fill-opacity="0.074"/><polygon points="1285.3,286.9 1301.0,282.0 1345.6,286.4 1331.0,291.6" fill="#FF0000" fill-opacity="0.074"/><polygon points="1331.0,291.6 1345.6,286.4 1341.6,316.1 1327.0,322.1" fill="#FF0000" fill-opacity="0.074"/><polygon points="1345.6,286.4 1392.9,291.1 1388.3,321.5 1341.6,316.1" fill="#FF0000" fill-opacity="0.074"/><polygon points="1327.0,322.1 1341.6,316.1 1388.3,321.5 1374.8,328.0" fill="#FF0000" fill-opacity="0.074"/><polygon points="1331.0,291.6 1379.3,296.6 1374.8,328.0 1327.0,322.1" fill="#FF0000" fill-opacity="0.074"/><polygon points="1379.3,296.6 1392.9,291.1 1388.3,321.5 1374.8,328.0" fill="#FF0000" fill-opacity="0.074"/><polygon points="1331.0,291.6 1345.6,286.4 1392.9,291.1 1379.3,296.6" fill="#FF0000" fill-opacity="0.074"/><polygon points="1268.7,292.1 1285.3,286.9 1281.8,316.6 1265.2,322.7" fill="#FF0000" fill-opacity="0.074"/><polygon points="1285.3,286.9 1331.0,291.6 1327.0,322.1 1281.8,316.6" fill="#FF0000" fill-opacity="0.074"/><polygon points="1265.2,322.7 1281.8,316.6 1327.0,322.1 1311.3,328.6" fill="#FF0000" fill-opacity="0.074"/><polygon points="1268.7,292.1 1315.3,297.1 1311.3,328.6 1265.2,322.7" fill="#FF0000" fill-opacity="0.074"/><polygon points="1315.3,297.1 1331.0,291.6 1327.0,322.1 1311.3,328.6" fill="#FF0000" fill-opacity="0.074"/><polygon points="1268.7,292.1 1285.3,286.9 1331.0,291.6 1315.3,297.1" fill="#FF0000" fill-opacity="0.074"/><polygon points="1315.3,297.1 1331.0,291.6 1327.0,322.1 1311.3,328.6" fill="#FF0000" fill-opacity="0.074"/><polygon points="1331.0,291.6 1379.3,296.6 1374.8,328.0 1327.0,322.1" fill="#FF0000" fill-opacity="0.074"/><polygon points="1311.3,328.6 1327.0,322.1 1374.8,328.0 1360.3,334.8" fill="#FF0000" fill-opacity="0.074"/><polygon points="1315.3,297.1 1364.8,302.5 1360.3,334.8 1311.3,328.6" fill="#FF0000" fill-opacity="0.074"/><polygon points="1364.8,302.5 1379.3,296.6 1374.8,328.0 1360.3,334.8" fill="#FF0000" fill-opacity="0.074"/><polygon points="1315.3,297.1 1331.0,291.6 1379.3,296.6 1364.8,302.5" fill="#FF0000" fill-opacity="0.074"/><polygon points="1251.0,297.7 1268.7,292.1 1265.2,322.7 1247.6,329.2" fill="#FF0000" fill-opacity="0.074"/><polygon points="1268.7,292.1 1315.3,297.1 1311.3,328.6 1265.2,322.7" fill="#FF0000" fill-opacity="0.074"/><polygon points="1247.6,329.2 1265.2,322.7 1311.3,328.6 1294.7,335.4" fill="#FF0000" fill-opacity="0.074"/><polygon points="1251.0,297.7 1298.7,303.0 1294.7,335.4 1247.6,329.2" fill="#FF0000" fill-opacity="0.074"/><polygon points="1298.7,303.0 1315.3,297.1 1311.3,328.6 1294.7,335.4" fill="#FF0000" fill-opacity="0.074"/><polygon points="1251.0,297.7 1268.7,292.1 1315.3,297.1 1298.7,303.0" fill="#FF0000" fill-opacity="0.074"/><polygon points="1298.7,303.0 1315.3,297.1 1311.3,328.6 1294.7,335.4" fill="#FF0000" fill-opacity="0.074"/><polygon points="1315.3,297.1 1364.8,302.5 1360.3,334.8 1311.3,328.6" fill="#FF0000" fill-opacity="0.074"/><polygon points="1294.7,335.4 1311.3,328.6 1360.3,334.8 1344.8,342.1" fill="#FF0000" fill-opacity="0.074"/><polygon points="1298.7,303.0 1349.3,308.7 1344.8,342.1 1294.7,335.4" fill="#FF0000" fill-opacity="0.074"/><polygon points="1349.3,308.7 1364.8,302.5 1360.3,334.8 1344.8,342.1" fill="#FF0000" fill-opacity="0.074"/><polygon points="1298.7,303.0 1315.3,297.1 1364.8,302.5 1349.3,308.7" fill="#FF0000" fill-opacity="0.074"/><polygon points="1232.1,303.6 1251.0,297.7 1247.6,329.2 1228.7,336.1" fill="#FF0000" fill-opacity="0.074"/><polygon points="1251.0,297.7 1298.7,303.0 1294.7,335.4 1247.6,329.2" fill="#FF0000" fill-opacity="0.074"/><polygon points="1228.7,336.1 1247.6,329.2 1294.7,335.4 1276.9,342.8" fill="#FF0000" fill-opacity="0.074"/><polygon points="1232.1,303.6 1280.8,309.3 1276.9,342.8 1228.7,336.1" fill="#FF0000" fill-opacity="0.074"/><polygon points="1280.8,309.3 1298.7,303.0 1294.7,335.4 1276.9,342.8" fill="#FF0000" fill-opacity="0.074"/><polygon points="1232.1,303.6 1251.0,297.7 1298.7,303.0 1280.8,309.3" fill="#FF0000" fill-opacity="0.074"/><polygon points="1280.8,309.3 1298.7,303.0 1294.7,335.4 1276.9,342.8" fill="#FF0000" fill-opacity="0.074"/><polygon points="1298.7,303.0 1349.3,308.7 1344.8,342.1 1294.7,335.4" fill="#FF0000" fill-opacity="0.074"/><polygon points="1276.9,342.8 1294.7,335.4 1344.8,342.1 1328.2,349.9" fill="#FF0000" fill-opacity="0.074"/><polygon points="1280.8,309.3 1332.7,315.4 1328.2,349.9 1276.9,342.8" fill="#FF0000" fill-opacity="0.074"/><polygon points="1332.7,315.4 1349.3,308.7 1344.8,342.1 1328.2,349.9" fill="#FF0000" fill-opacity="0.074"/><polygon points="1280.8,309.3 1298.7,303.0 1349.3,308.7 1332.7,315.4" fill="#FF0000" fill-opacity="0.074"/><polygon points="1211.9,309.9 1232.1,303.6 1228.7,336.1 1208.6,343.5" fill="#FF0000" fill-opacity="0.074"/><polygon points="1232.1,303.6 1280.8,309.3 1276.9,342.8 1228.7,336.1" fill="#FF0000" fill-opacity="0.074"/><polygon points="1208.6,343.5 1228.7,336.1 1276.9,342.8 1257.8,350.7" fill="#FF0000" fill-opacity="0.074"/><polygon points="1211.9,309.9 1261.7,316.1 1257.8,350.7 1208.6,343.5" fill="#FF0000" fill-opacity="0.074"/><polygon points="1261.7,316.1 1280.8,309.3 1276.9,342.8 1257.8,350.7" fill="#FF0000" fill-opacity="0.074"/><polygon points="1211.9,309.9 1232.1,303.6 1280.8,309.3 1261.7,316.1" fill="#FF0000" fill-opacity="0.074"/><polygon points="1261.7,316.1 1280.8,309.3 1276.9,342.8 1257.8,350.7" fill="#FF0000" fill-opacity="0.074"/><polygon points="1280.8,309.3 1332.7,315.4 1328.2,349.9 1276.9,342.8" fill="#FF0000" fill-opacity="0.074"/><polygon points="1257.8,350.7 1276.9,342.8 1328.2,349.9 1310.3,358.3" fill="#FF0000" fill-opacity="0.074"/><polygon points="1261.7,316.1 1314.9,322.6 1310.3,358.3 1257.8,350.7" fill="#FF0000" fill-opacity="0.074"/><polygon points="1314.9,322.6 1332.7,315.4 1328.2,349.9 1310.3,358.3" fill="#FF0000" fill-opacity="0.074"/><polygon points="1261.7,316.1 1280.8,309.3 1332.7,315.4 1314.9,322.6" fill="#FF0000" fill-opacity="0.074"/><polygon points="1190.2,316.7 1211.9,309.9 1208.6,343.5 1187.0,351.4" fill="#FF0000" fill-opacity="0.074"/><polygon points="1211.9,309.9 1261.7,316.1 1257.8,350.7 1208.6,343.5" fill="#FF0000" fill-opacity="0.074"/><polygon points="1187.0,351.4 1208.6,343.5 1257.8,350.7 1237.3,359.1" fill="#FF0000" fill-opacity="0.074"/><polygon points="1190.2,316.7 1241.1,323.3 1237.3,359.1 1187.0,351.4" fill="#FF0000" fill-opacity="0.074"/><polygon points="1241.1,323.3 1261.7,316.1 1257.8,350.7 1237.3,359.1" fill="#FF0000" fill-opacity="0.074"/><polygon points="1190.2,316.7 1211.9,309.9 1261.7,316.1 1241.1,323.3" fill="#FF0000" fill-opacity="0.074"/><polygon points="1241.1,323.3 1261.7,316.1 1257.8,350.7 1237.3,359.1" fill="#FF0000" fill-opacity="0.074"/><polygon points="1261.7,316.1 1314.9,322.6 1310.3,358.3 1257.8,350.7" fill="#FF0000" fill-opacity="0.074"/><polygon points="1237.3,359.1 1257.8,350.7 1310.3,358.3 1291.1,367.4" fill="#FF0000" fill-opacity="0.074"/><polygon points="1241.1,323.3 1295.7,330.4 1291.1,367.4 1237.3,359.1" fill="#FF0000" fill-opacity="0.074"/><polygon points="1295.7,330.4 1314.9,322.6 1310.3,358.3 1291.1,367.4" fill="#FF0000" fill-opacity="0.074"/><polygon points="1241.1,323.3 1261.7,316.1 1314.9,322.6 1295.7,330.4" fill="#FF0000" fill-opacity="0.074"/><polygon points="1166.9,324.0 1190.2,316.7 1187.0,351.4 1163.8,359.9" fill="#FF0000" fill-opacity="0.074"/><polygon points="1190.2,316.7 1241.1,323.3 1237.3,359.1 1187.0,351.4" fill="#FF0000" fill-opacity="0.074"/><polygon points="1163.8,359.9 1187.0,351.4 1237.3,359.1 1215.2,368.3" fill="#FF0000" fill-opacity="0.074"/><polygon points="1166.9,324.0 1219.0,331.1 1215.2,368.3 1163.8,359.9" fill="#FF0000" fill-opacity="0.074"/><polygon points="1219.0,331.1 1241.1,323.3 1237.3,359.1 1215.2,368.3" fill="#FF0000" fill-opacity="0.074"/><polygon points="1166.9,324.0 1190.2,316.7 1241.1,323.3 1219.0,331.1" fill="#FF0000" fill-opacity="0.074"/><polygon points="1219.0,331.1 1241.1,323.3 1237.3,359.1 1215.2,368.3" fill="#FF0000" fill-opacity="0.074"/><polygon points="1241.1,323.3 1295.7,330.4 1291.1,367.4 1237.3,359.1" fill="#FF0000" fill-opacity="0.074"/><polygon points="1215.2,368.3 1237.3,359.1 1291.1,367.4 1270.4,377.2" fill="#FF0000" fill-opacity="0.074"/><polygon points="1219.0,331.1 1274.9,338.8 1270.4,377.2 1215.2,368.3" fill="#FF0000" fill-opacity="0.074"/><polygon points="1274.9,338.8 1295.7,330.4 1291.1,367.4 1270.4,377.2" fill="#FF0000" fill-opacity="0.074"/><polygon points="1219.0,331.1 1241.1,323.3 1295.7,330.4 1274.9,338.8" fill="#FF0000" fill-opacity="0.074"/><polygon points="1141.8,331.9 1166.9,324.0 1163.8,359.9 1138.8,369.1" fill="#FF0000" fill-opacity="0.074"/><polygon points="1166.9,324.0 1219.0,331.1 1215.2,368.3 1163.8,359.9" fill="#FF0000" fill-opacity="0.074"/><polygon points="1138.8,369.1 1163.8,359.9 1215.2,368.3 1191.4,378.1" fill="#FF0000" fill-opacity="0.074"/><polygon points="1141.8,331.9 1195.0,339.6 1191.4,378.1 1138.8,369.1" fill="#FF0000" fill-opacity="0.074"/><polygon points="1195.0,339.6 1219.0,331.1 1215.2,368.3 1191.4,378.1" fill="#FF0000" fill-opacity="0.074"/><polygon points="1141.8,331.9 1166.9,324.0 1219.0,331.1 1195.0,339.6" fill="#FF0000" fill-opacity="0.074"/><polygon points="1195.0,339.6 1219.0,331.1 1215.2,368.3 1191.4,378.1" fill="#FF0000" fill-opacity="0.074"/><polygon points="1219.0,331.1 1274.9,338.8 1270.4,377.2 1215.2,368.3" fill="#FF0000" fill-opacity="0.074"/><polygon points="1191.4,378.1 1215.2,368.3 1270.4,377.2 1248.0,387.8" fill="#FF0000" fill-opacity="0.074"/><polygon points="1195.0,339.6 1252.4,347.9 1248.0,387.8 1191.4,378.1" fill="#FF0000" fill-opacity="0.074"/><polygon points="1252.4,347.9 1274.9,338.8 1270.4,377.2 1248.0,387.8" fill="#FF0000" fill-opacity="0.074"/><polygon points="1195.0,339.6 1219.0,331.1 1274.9,338.8 1252.4,347.9" fill="#FF0000" fill-opacity="0.074"/><polygon points="1114.6,340.4 1141.8,331.9 1138.8,369.1 1111.8,379.0" fill="#FF0000" fill-opacity="0.074"/><polygon points="1141.8,331.9 1195.0,339.6 1191.4,378.1 1138.8,369.1" fill="#FF0000" fill-opacity="0.074"/><polygon points="1111.8,379.0 1138.8,369.1 1191.4,378.1 1165.5,388.8" fill="#FF0000" fill-opacity="0.074"/><polygon points="1114.6,340.4 1169.1,348.8 1165.5,388.8 1111.8,379.0" fill="#FF0000" fill-opacity="0.074"/><polygon points="1169.1,348.8 1195.0,339.6 1191.4,378.1 1165.5,388.8" fill="#FF0000" fill-opacity="0.074"/><polygon points="1114.6,340.4 1141.8,331.9 1195.0,339.6 1169.1,348.8" fill="#FF0000" fill-opacity="0.074"/><polygon points="1169.1,348.8 1195.0,339.6 1191.4,378.1 1165.5,388.8" fill="#FF0000" fill-opacity="0.074"/><polygon points="1195.0,339.6 1252.4,347.9 1248.0,387.8 1191.4,378.1" fill="#FF0000" fill-opacity="0.074"/><polygon points="1165.5,388.8 1191.4,378.1 1248.0,387.8 1223.6,399.3" fill="#FF0000" fill-opacity="0.074"/><polygon points="1169.1,348.8 1227.9,357.8 1223.6,399.3 1165.5,388.8" fill="#FF0000" fill-opacity="0.074"/><polygon points="1227.9,357.8 1252.4,347.9 1248.0,387.8 1223.6,399.3" fill="#FF0000" fill-opacity="0.074"/><polygon points="1169.1,348.8 1195.0,339.6 1252.4,347.9 1227.9,357.8" fill="#FF0000" fill-opacity="0.074"/><polygon points="1085.1,349.6 1114.6,340.4 1111.8,379.0 1082.5,389.8" fill="#FF0000" fill-opacity="0.074"/><polygon points="1114.6,340.4 1169.1,348.8 1165.5,388.8 1111.8,379.0" fill="#FF0000" fill-opacity="0.074"/><polygon points="1082.5,389.8 1111.8,379.0 1165.5,388.8 1137.5,400.4" fill="#FF0000" fill-opacity="0.074"/><polygon points="1085.1,349.6 1140.8,358.7 1137.5,400.4 1082.5,389.8" fill="#FF0000" fill-opacity="0.074"/><polygon points="1140.8,358.7 1169.1,348.8 1165.5,388.8 1137.5,400.4" fill="#FF0000" fill-opacity="0.074"/><polygon points="1085.1,349.6 1114.6,340.4 1169.1,348.8 1140.8,358.7" fill="#FF0000" fill-opacity="0.074"/><polygon points="1140.8,358.7 1169.1,348.8 1165.5,388.8 1137.5,400.4" fill="#FF0000" fill-opacity="0.074"/><polygon points="1169.1,348.8 1227.9,357.8 1223.6,399.3 1165.5,388.8" fill="#FF0000" fill-opacity="0.074"/><polygon points="1137.5,400.4 1165.5,388.8 1223.6,399.3 1197.0,411.8" fill="#FF0000" fill-opacity="0.074"/><polygon points="1140.8,358.7 1201.2,368.6 1197.0,411.8 1137.5,400.4" fill="#FF0000" fill-opacity="0.074"/><polygon points="1201.2,368.6 1227.9,357.8 1223.6,399.3 1197.0,411.8" fill="#FF0000" fill-opacity="0.074"/><polygon points="1140.8,358.7 1169.1,348.8 1227.9,357.8 1201.2,368.6" fill="#FF0000" fill-opacity="0.074"/><polygon points="1093.5,356.3 1153.5,366.3 1150.1,407.3 1090.9,395.7" fill="rgba(206,232,84,.84)" /><polygon points="1153.5,366.3 1185.9,354.2 1182.3,393.4 1150.1,407.3" fill="rgba(230,202,92,.84)" /><polygon points="1093.5,356.3 1127.5,345.2 1185.9,354.2 1153.5,366.3" fill="rgba(255,241,158,.90)" /><polygon points="1053.0,359.7 1085.1,349.6 1082.5,389.8 1050.7,401.5" fill="#00FF00" fill-opacity="0.075"/><polygon points="1085.1,349.6 1140.8,358.7 1137.5,400.4 1082.5,389.8" fill="#00FF00" fill-opacity="0.075"/><polygon points="1050.7,401.5 1082.5,389.8 1137.5,400.4 1106.8,413.0" fill="#00FF00" fill-opacity="0.075"/><polygon points="1053.0,359.7 1109.9,369.6 1106.8,413.0 1050.7,401.5" fill="#00FF00" fill-opacity="0.075"/><polygon points="1109.9,369.6 1140.8,358.7 1137.5,400.4 1106.8,413.0" fill="#00FF00" fill-opacity="0.075"/><polygon points="1053.0,359.7 1085.1,349.6 1140.8,358.7 1109.9,369.6" fill="#00FF00" fill-opacity="0.075"/><polygon points="1109.9,369.6 1140.8,358.7 1137.5,400.4 1106.8,413.0" fill="#00FF00" fill-opacity="0.075"/><polygon points="1140.8,358.7 1201.2,368.6 1197.0,411.8 1137.5,400.4" fill="#00FF00" fill-opacity="0.075"/><polygon points="1106.8,413.0 1137.5,400.4 1197.0,411.8 1167.8,425.5" fill="#00FF00" fill-opacity="0.075"/><polygon points="1109.9,369.6 1171.9,380.4 1167.8,425.5 1106.8,413.0" fill="#00FF00" fill-opacity="0.075"/><polygon points="1171.9,380.4 1201.2,368.6 1197.0,411.8 1167.8,425.5" fill="#00FF00" fill-opacity="0.075"/><polygon points="1109.9,369.6 1140.8,358.7 1201.2,368.6 1171.9,380.4" fill="#00FF00" fill-opacity="0.075"/><polygon points="1018.0,370.7 1053.0,359.7 1050.7,401.5 1016.0,414.2" fill="#00FF00" fill-opacity="0.075"/><polygon points="1053.0,359.7 1109.9,369.6 1106.8,413.0 1050.7,401.5" fill="#00FF00" fill-opacity="0.075"/><polygon points="1016.0,414.2 1050.7,401.5 1106.8,413.0 1073.3,426.9" fill="#00FF00" fill-opacity="0.075"/><polygon points="1018.0,370.7 1076.1,381.6 1073.3,426.9 1016.0,414.2" fill="#00FF00" fill-opacity="0.075"/><polygon points="1076.1,381.6 1109.9,369.6 1106.8,413.0 1073.3,426.9" fill="#00FF00" fill-opacity="0.075"/><polygon points="1018.0,370.7 1053.0,359.7 1109.9,369.6 1076.1,381.6" fill="#00FF00" fill-opacity="0.075"/><polygon points="1076.1,381.6 1109.9,369.6 1106.8,413.0 1073.3,426.9" fill="#00FF00" fill-opacity="0.075"/><polygon points="1109.9,369.6 1171.9,380.4 1167.8,425.5 1106.8,413.0" fill="#00FF00" fill-opacity="0.075"/><polygon points="1073.3,426.9 1106.8,413.0 1167.8,425.5 1135.8,440.7" fill="#00FF00" fill-opacity="0.075"/><polygon points="1076.1,381.6 1139.6,393.5 1135.8,440.7 1073.3,426.9" fill="#00FF00" fill-opacity="0.075"/><polygon points="1139.6,393.5 1171.9,380.4 1167.8,425.5 1135.8,440.7" fill="#00FF00" fill-opacity="0.075"/><polygon points="1076.1,381.6 1109.9,369.6 1171.9,380.4 1139.6,393.5" fill="#00FF00" fill-opacity="0.075"/><polygon points="979.5,382.7 1018.0,370.7 1016.0,414.2 977.9,428.2" fill="#00FF00" fill-opacity="0.075"/><polygon points="1018.0,370.7 1076.1,381.6 1073.3,426.9 1016.0,414.2" fill="#00FF00" fill-opacity="0.075"/><polygon points="977.9,428.2 1016.0,414.2 1073.3,426.9 1036.4,442.1" fill="#00FF00" fill-opacity="0.075"/><polygon points="979.5,382.7 1038.8,394.7 1036.4,442.1 977.9,428.2" fill="#00FF00" fill-opacity="0.075"/><polygon points="1038.8,394.7 1076.1,381.6 1073.3,426.9 1036.4,442.1" fill="#00FF00" fill-opacity="0.075"/><polygon points="979.5,382.7 1018.0,370.7 1076.1,381.6 1038.8,394.7" fill="#00FF00" fill-opacity="0.075"/><polygon points="1038.8,394.7 1076.1,381.6 1073.3,426.9 1036.4,442.1" fill="#00FF00" fill-opacity="0.075"/><polygon points="1076.1,381.6 1139.6,393.5 1135.8,440.7 1073.3,426.9" fill="#00FF00" fill-opacity="0.075"/><polygon points="1036.4,442.1 1073.3,426.9 1135.8,440.7 1100.4,457.3" fill="#00FF00" fill-opacity="0.075"/><polygon points="1038.8,394.7 1103.9,407.9 1100.4,457.3 1036.4,442.1" fill="#00FF00" fill-opacity="0.075"/><polygon points="1103.9,407.9 1139.6,393.5 1135.8,440.7 1100.4,457.3" fill="#00FF00" fill-opacity="0.075"/><polygon points="1038.8,394.7 1076.1,381.6 1139.6,393.5 1103.9,407.9" fill="#00FF00" fill-opacity="0.075"/><polygon points="937.1,396.0 979.5,382.7 977.9,428.2 936.1,443.6" fill="#00FF00" fill-opacity="0.075"/><polygon points="979.5,382.7 1038.8,394.7 1036.4,442.1 977.9,428.2" fill="#00FF00" fill-opacity="0.075"/><polygon points="936.1,443.6 977.9,428.2 1036.4,442.1 995.6,459.0" fill="#00FF00" fill-opacity="0.075"/><polygon points="937.1,396.0 997.6,409.3 995.6,459.0 936.1,443.6" fill="#00FF00" fill-opacity="0.075"/><polygon points="997.6,409.3 1038.8,394.7 1036.4,442.1 995.6,459.0" fill="#00FF00" fill-opacity="0.075"/><polygon points="937.1,396.0 979.5,382.7 1038.8,394.7 997.6,409.3" fill="#00FF00" fill-opacity="0.075"/><polygon points="997.6,409.3 1038.8,394.7 1036.4,442.1 995.6,459.0" fill="#00FF00" fill-opacity="0.075"/><polygon points="1038.8,394.7 1103.9,407.9 1100.4,457.3 1036.4,442.1" fill="#00FF00" fill-opacity="0.075"/><polygon points="995.6,459.0 1036.4,442.1 1100.4,457.3 1061.1,475.9" fill="#00FF00" fill-opacity="0.075"/><polygon points="997.6,409.3 1064.2,423.9 1061.1,475.9 995.6,459.0" fill="#00FF00" fill-opacity="0.075"/><polygon points="1064.2,423.9 1103.9,407.9 1100.4,457.3 1061.1,475.9" fill="#00FF00" fill-opacity="0.075"/><polygon points="997.6,409.3 1038.8,394.7 1103.9,407.9 1064.2,423.9" fill="#00FF00" fill-opacity="0.075"/><polygon points="890.2,410.7 937.1,396.0 936.1,443.6 889.7,460.6" fill="#00FF00" fill-opacity="0.075"/><polygon points="937.1,396.0 997.6,409.3 995.6,459.0 936.1,443.6" fill="#00FF00" fill-opacity="0.075"/><polygon points="889.7,460.6 936.1,443.6 995.6,459.0 950.2,477.7" fill="#00FF00" fill-opacity="0.075"/><polygon points="890.2,410.7 951.6,425.5 950.2,477.7 889.7,460.6" fill="#00FF00" fill-opacity="0.075"/><polygon points="951.6,425.5 997.6,409.3 995.6,459.0 950.2,477.7" fill="#00FF00" fill-opacity="0.075"/><polygon points="890.2,410.7 937.1,396.0 997.6,409.3 951.6,425.5" fill="#00FF00" fill-opacity="0.075"/><polygon points="951.6,425.5 997.6,409.3 995.6,459.0 950.2,477.7" fill="#00FF00" fill-opacity="0.075"/><polygon points="997.6,409.3 1064.2,423.9 1061.1,475.9 995.6,459.0" fill="#00FF00" fill-opacity="0.075"/><polygon points="950.2,477.7 995.6,459.0 1061.1,475.9 1017.2,496.6" fill="#00FF00" fill-opacity="0.075"/><polygon points="951.6,425.5 1019.7,441.9 1017.2,496.6 950.2,477.7" fill="#00FF00" fill-opacity="0.075"/><polygon points="1019.7,441.9 1064.2,423.9 1061.1,475.9 1017.2,496.6" fill="#00FF00" fill-opacity="0.075"/><polygon points="951.6,425.5 997.6,409.3 1064.2,423.9 1019.7,441.9" fill="#00FF00" fill-opacity="0.075"/><polygon points="838.0,427.0 890.2,410.7 889.7,460.6 838.3,479.5" fill="#00FF00" fill-opacity="0.075"/><polygon points="890.2,410.7 951.6,425.5 950.2,477.7 889.7,460.6" fill="#00FF00" fill-opacity="0.075"/><polygon points="838.3,479.5 889.7,460.6 950.2,477.7 899.6,498.6" fill="#00FF00" fill-opacity="0.075"/><polygon points="838.0,427.0 900.2,443.6 899.6,498.6 838.3,479.5" fill="#00FF00" fill-opacity="0.075"/><polygon points="900.2,443.6 951.6,425.5 950.2,477.7 899.6,498.6" fill="#00FF00" fill-opacity="0.075"/><polygon points="838.0,427.0 890.2,410.7 951.6,425.5 900.2,443.6" fill="#00FF00" fill-opacity="0.075"/><polygon points="900.2,443.6 951.6,425.5 950.2,477.7 899.6,498.6" fill="#00FF00" fill-opacity="0.075"/><polygon points="951.6,425.5 1019.7,441.9 1017.2,496.6 950.2,477.7" fill="#00FF00" fill-opacity="0.075"/><polygon points="899.6,498.6 950.2,477.7 1017.2,496.6 967.8,519.9" fill="#00FF00" fill-opacity="0.075"/><polygon points="900.2,443.6 969.7,462.1 967.8,519.9 899.6,498.6" fill="#00FF00" fill-opacity="0.075"/><polygon points="969.7,462.1 1019.7,441.9 1017.2,496.6 967.8,519.9" fill="#00FF00" fill-opacity="0.075"/><polygon points="900.2,443.6 951.6,425.5 1019.7,441.9 969.7,462.1" fill="#00FF00" fill-opacity="0.075"/><polygon points="779.4,445.4 838.0,427.0 838.3,479.5 780.7,500.6" fill="#00FF00" fill-opacity="0.075"/><polygon points="838.0,427.0 900.2,443.6 899.6,498.6 838.3,479.5" fill="#00FF00" fill-opacity="0.075"/><polygon points="780.7,500.6 838.3,479.5 899.6,498.6 842.5,522.1" fill="#00FF00" fill-opacity="0.075"/><polygon points="779.4,445.4 842.3,464.1 842.5,522.1 780.7,500.6" fill="#00FF00" fill-opacity="0.075"/><polygon points="842.3,464.1 900.2,443.6 899.6,498.6 842.5,522.1" fill="#00FF00" fill-opacity="0.075"/><polygon points="779.4,445.4 838.0,427.0 900.2,443.6 842.3,464.1" fill="#00FF00" fill-opacity="0.075"/><polygon points="842.3,464.1 900.2,443.6 899.6,498.6 842.5,522.1" fill="#00FF00" fill-opacity="0.075"/><polygon points="900.2,443.6 969.7,462.1 967.8,519.9 899.6,498.6" fill="#00FF00" fill-opacity="0.075"/><polygon points="842.5,522.1 899.6,498.6 967.8,519.9 911.9,546.3" fill="#00FF00" fill-opacity="0.075"/><polygon points="842.3,464.1 912.8,485.1 911.9,546.3 842.5,522.1" fill="#00FF00" fill-opacity="0.075"/><polygon points="912.8,485.1 969.7,462.1 967.8,519.9 911.9,546.3" fill="#00FF00" fill-opacity="0.075"/><polygon points="842.3,464.1 900.2,443.6 969.7,462.1 912.8,485.1" fill="#00FF00" fill-opacity="0.075"/>
<polygon points="893.0,558.9 1443.7,296.9 1438.9,325.9 892.3,625.2" fill="#ADE3AF" /><polygon points="874.6,557.5 882.1,560.3 881.6,621.5 874.3,618.4" fill="#C9F0CA" /><polygon points="882.1,560.3 893.0,558.9 892.3,625.2 887.1,624.9 881.6,621.5" fill="#BDEBBE" /><polygon points="874.6,557.5 911.5,540.4 923.3,544.4 886.6,561.9" fill="rgb(255,255,255)" /><polygon points="908.5,541.8 942.8,525.8 954.5,529.6 920.4,545.8" fill="rgb(255,255,255)" /><polygon points="940.0,527.1 972.0,512.2 983.6,515.8 951.8,530.9" fill="rgb(255,255,255)" /><polygon points="969.4,513.4 999.3,499.5 1010.8,502.8 981.0,517.0" fill="rgb(255,255,255)" /><polygon points="996.9,500.7 1024.9,487.6 1036.2,490.7 1008.3,504.0" fill="rgb(255,255,255)" /><polygon points="1022.6,488.7 1048.9,476.5 1060.1,479.4 1033.9,491.8" fill="rgb(255,255,255)" /><polygon points="1046.8,477.5 1071.5,466.0 1082.5,468.7 1057.9,480.4" fill="rgb(255,255,255)" /><polygon points="1069.5,466.9 1092.8,456.1 1103.7,458.7 1080.5,469.7" fill="rgb(255,255,255)" /><polygon points="1090.9,457.0 1112.9,446.7 1123.6,449.2 1101.8,459.6" fill="rgb(255,255,255)" /><polygon points="1111.1,447.6 1131.9,437.9 1142.5,440.2 1121.8,450.0" fill="rgb(255,255,255)" /><polygon points="1130.2,438.7 1149.9,429.5 1160.3,431.7 1140.8,441.0" fill="rgb(255,255,255)" /><polygon points="1148.3,430.3 1167.0,421.6 1177.2,423.7 1158.7,432.5" fill="rgb(254,255,254)" /><polygon points="1165.5,422.3 1183.2,414.1 1193.3,416.0 1175.7,424.4" fill="rgb(242,251,242)" /><polygon points="1181.8,414.7 1198.6,406.9 1208.6,408.8 1191.8,416.7" fill="rgb(230,247,231)" /><polygon points="1197.2,407.5 1213.3,400.1 1223.1,401.9 1207.2,409.4" fill="rgb(218,243,219)" /><polygon points="1212.0,400.7 1227.3,393.6 1236.9,395.3 1221.8,402.5" fill="rgb(206,240,208)" /><polygon points="1226.0,394.2 1240.6,387.4 1250.1,389.0 1235.7,395.9" fill="rgb(200,238,202)" /><polygon points="1239.4,387.9 1253.4,381.4 1262.7,383.0 1248.9,389.6" fill="rgb(199,238,201)" /><polygon points="1252.2,382.0 1265.6,375.8 1274.8,377.3 1261.6,383.5" fill="rgb(199,238,201)" /><polygon points="1264.5,376.3 1277.2,370.3 1286.3,371.8 1273.7,377.8" fill="rgb(199,238,201)" /><polygon points="1276.2,370.8 1288.4,365.1 1297.4,366.5 1285.3,372.3" fill="rgb(198,237,200)" /><polygon points="1287.4,365.6 1299.1,360.2 1308.0,361.5 1296.4,367.0" fill="rgb(198,237,200)" /><polygon points="1298.2,360.6 1309.4,355.4 1318.2,356.6 1307.0,361.9" fill="rgb(197,237,199)" /><polygon points="1308.5,355.8 1319.3,350.8 1327.9,352.0 1317.2,357.1" fill="rgb(197,237,199)" /><polygon points="1318.4,351.2 1328.8,346.4 1337.3,347.5 1327.0,352.4" fill="rgb(196,237,198)" /><polygon points="1328.0,346.8 1338.0,342.1 1346.3,343.2 1336.5,347.9" fill="rgb(196,237,198)" /><polygon points="1337.1,342.5 1346.8,338.0 1355.0,339.1 1345.5,343.6" fill="rgb(196,237,198)" /><polygon points="1346.0,338.4 1355.3,334.1 1363.4,335.1 1354.2,339.5" fill="rgb(195,237,197)" /><polygon points="1354.5,334.4 1363.4,330.3 1371.5,331.3 1362.6,335.5" fill="rgb(195,236,197)" /><polygon points="1362.7,330.6 1371.3,326.6 1379.2,327.6 1370.7,331.6" fill="rgb(194,236,196)" /><polygon points="1370.6,326.9 1378.9,323.1 1386.8,324.0 1378.5,327.9" fill="rgb(194,236,196)" /><polygon points="1378.2,323.4 1386.3,319.7 1394.0,320.6 1386.1,324.3" fill="rgb(194,236,196)" /><polygon points="1385.6,320.0 1393.4,316.3 1401.0,317.2 1393.4,320.9" fill="rgb(193,236,195)" /><polygon points="1392.7,316.6 1400.3,313.2 1407.8,314.0 1400.4,317.5" fill="rgb(193,236,195)" /><polygon points="1399.6,313.4 1406.9,310.1 1414.4,310.9 1407.2,314.3" fill="rgb(192,236,194)" /><polygon points="1406.3,310.3 1413.4,307.1 1420.7,307.9 1413.8,311.2" fill="rgb(192,236,194)" /><polygon points="1412.8,307.3 1419.6,304.2 1426.9,304.9 1420.1,308.1" fill="rgb(191,235,193)" /><polygon points="1419.0,304.4 1425.6,301.4 1432.8,302.1 1426.3,305.2" fill="rgb(191,235,193)" /><polygon points="1425.1,301.6 1431.5,298.6 1438.6,299.4 1432.3,302.4" fill="rgb(191,235,193)" /><polygon points="1431.0,298.9 1437.2,296.0 1444.2,296.7 1438.1,299.6" fill="rgb(190,235,192)" />
<polygon points="1394.0,445.9 1430.9,452.9 1430.6,454.8 1393.7,447.8" fill="#BDBDBD" /><polygon points="1430.9,452.9 1450.0,436.2 1449.7,438.1 1430.6,454.8" fill="#C4C4C4" /><polygon points="1394.0,445.9 1414.6,429.9 1450.0,436.2 1430.9,452.9" fill="#E9E9E9" /><polygon points="1397.5,444.4 1427.6,450.1 1427.5,451.1 1397.3,445.4" fill="#C8C8C8" /><polygon points="1427.6,450.1 1444.9,435.4 1444.7,436.3 1427.5,451.1" fill="#CFCFCF" /><polygon points="1397.5,444.4 1415.8,430.2 1444.9,435.4 1427.6,450.1" fill="#E0E0E0" /><polygon points="1426.1,316.4 1444.3,318.4 1423.4,445.7 1406.0,442.4" fill="url(#gLegL)" /><polygon points="1444.3,318.4 1455.9,312.3 1435.2,435.9 1423.4,445.7" fill="#ADADAD" /><polygon points="1426.1,316.4 1438.1,310.3 1455.9,312.3 1444.3,318.4" fill="#E4E4E4" /><polygon points="1444.7,320.1 1445.2,319.9 1425.2,441.3 1424.6,441.7" fill="#C9C9C9" /><circle cx="1443.6" cy="347.5" r="1.9" fill="#C2C2C2" stroke="#8C8C8C" stroke-width=".8"/><circle cx="1448.4" cy="341.0" r="1.9" fill="#C2C2C2" stroke="#8C8C8C" stroke-width=".8"/><circle cx="1433.9" cy="403.6" r="1.9" fill="#C2C2C2" stroke="#8C8C8C" stroke-width=".8"/><circle cx="1438.7" cy="396.7" r="1.9" fill="#C2C2C2" stroke="#8C8C8C" stroke-width=".8"/><polygon points="1342.0,486.3 1382.3,495.2 1382.0,497.3 1341.7,488.4" fill="#BDBDBD" /><polygon points="1382.3,495.2 1406.5,474.1 1406.2,476.1 1382.0,497.3" fill="#C4C4C4" /><polygon points="1342.0,486.3 1367.9,466.1 1406.5,474.1 1382.3,495.2" fill="#E9E9E9" /><polygon points="1345.9,484.6 1378.9,491.8 1378.8,492.9 1345.8,485.6" fill="#C8C8C8" /><polygon points="1378.9,491.8 1400.7,473.2 1400.5,474.2 1378.8,492.9" fill="#CFCFCF" /><polygon points="1345.9,484.6 1369.0,466.6 1400.7,473.2 1378.9,491.8" fill="#E0E0E0" /><polygon points="1376.6,341.4 1396.7,344.0 1375.0,486.1 1356.0,482.0" fill="url(#gLegL)" /><polygon points="1396.7,344.0 1411.3,336.1 1389.9,473.7 1375.0,486.1" fill="#ADADAD" /><polygon points="1376.6,341.4 1391.8,333.7 1411.3,336.1 1396.7,344.0" fill="#E4E4E4" /><polygon points="1397.1,345.8 1397.8,345.5 1377.1,481.0 1376.4,481.6" fill="#C9C9C9" /><circle cx="1397.0" cy="376.1" r="2.1" fill="#C2C2C2" stroke="#8C8C8C" stroke-width=".8"/><circle cx="1402.9" cy="368.5" r="2.1" fill="#C2C2C2" stroke="#8C8C8C" stroke-width=".8"/><circle cx="1386.7" cy="438.8" r="2.1" fill="#C2C2C2" stroke="#8C8C8C" stroke-width=".8"/><circle cx="1392.7" cy="430.6" r="2.1" fill="#C2C2C2" stroke="#8C8C8C" stroke-width=".8"/><polygon points="1275.1,538.2 1319.5,549.8 1319.1,552.3 1274.8,540.5" fill="#BDBDBD" /><polygon points="1319.5,549.8 1351.1,522.3 1350.7,524.6 1319.1,552.3" fill="#C4C4C4" /><polygon points="1275.1,538.2 1308.6,512.1 1351.1,522.3 1319.5,549.8" fill="#E9E9E9" /><polygon points="1279.7,536.2 1316.0,545.6 1315.8,546.8 1279.6,537.3" fill="#C8C8C8" /><polygon points="1316.0,545.6 1344.4,521.3 1344.2,522.5 1315.8,546.8" fill="#CFCFCF" /><polygon points="1279.7,536.2 1309.6,512.9 1344.4,521.3 1316.0,545.6" fill="#E0E0E0" /><polygon points="1312.5,373.7 1334.7,377.1 1312.8,538.0 1291.9,532.7" fill="url(#gLegL)" /><polygon points="1334.7,377.1 1354.0,366.8 1332.1,521.9 1312.8,538.0" fill="#ADADAD" /><polygon points="1312.5,373.7 1332.4,363.6 1354.0,366.8 1334.7,377.1" fill="#E4E4E4" /><polygon points="1335.4,379.2 1336.3,378.7 1315.4,532.1 1314.5,532.8" fill="#C9C9C9" /><circle cx="1336.7" cy="413.1" r="2.5" fill="#C2C2C2" stroke="#8C8C8C" stroke-width=".8"/><circle cx="1344.3" cy="403.9" r="2.4" fill="#C2C2C2" stroke="#8C8C8C" stroke-width=".8"/><circle cx="1326.1" cy="484.0" r="2.4" fill="#C2C2C2" stroke="#8C8C8C" stroke-width=".8"/><circle cx="1333.7" cy="474.1" r="2.4" fill="#C2C2C2" stroke="#8C8C8C" stroke-width=".8"/><polygon points="1186.0,607.3 1235.0,623.3 1234.7,626.1 1185.7,610.1" fill="#BDBDBD" /><polygon points="1235.0,623.3 1277.9,586.0 1277.6,588.6 1234.7,626.1" fill="#C4C4C4" /><polygon points="1186.0,607.3 1231.2,572.3 1277.9,586.0 1235.0,623.3" fill="#E9E9E9" /><polygon points="1191.6,604.9 1231.7,617.8 1231.5,619.2 1191.4,606.2" fill="#C8C8C8" /><polygon points="1231.7,617.8 1270.2,584.8 1270.0,586.1 1231.5,619.2" fill="#CFCFCF" /><polygon points="1191.6,604.9 1231.8,573.6 1270.2,584.8 1231.7,617.8" fill="#E0E0E0" /><polygon points="1226.2,417.2 1250.9,422.0 1229.9,607.3 1206.8,600.0" fill="url(#gLegL)" /><polygon points="1250.9,422.0 1277.4,407.8 1256.0,585.5 1229.9,607.3" fill="#ADADAD" /><polygon points="1226.2,417.2 1253.4,403.5 1277.4,407.8 1250.9,422.0" fill="#E4E4E4" /><polygon points="1252.1,424.2 1253.3,423.5 1233.1,600.1 1231.9,601.2" fill="#C9C9C9" /><circle cx="1255.9" cy="462.6" r="2.9" fill="#C2C2C2" stroke="#8C8C8C" stroke-width=".8"/><circle cx="1266.0" cy="451.1" r="2.8" fill="#C2C2C2" stroke="#8C8C8C" stroke-width=".8"/><circle cx="1245.3" cy="544.3" r="2.8" fill="#C2C2C2" stroke="#8C8C8C" stroke-width=".8"/><circle cx="1255.4" cy="531.8" r="2.8" fill="#C2C2C2" stroke="#8C8C8C" stroke-width=".8"/><polygon points="1061.3,704.1 1115.6,727.2 1115.3,730.5 1061.1,707.3" fill="#BDBDBD" /><polygon points="1115.6,727.2 1177.2,673.6 1176.9,676.7 1115.3,730.5" fill="#C4C4C4" /><polygon points="1061.3,704.1 1125.4,654.4 1177.2,673.6 1115.6,727.2" fill="#E9E9E9" /><polygon points="1068.3,701.0 1112.6,719.6 1112.5,721.2 1068.2,702.5" fill="#C8C8C8" /><polygon points="1112.6,719.6 1167.9,672.4 1167.7,673.9 1112.5,721.2" fill="#CFCFCF" /><polygon points="1068.3,701.0 1125.3,656.5 1167.9,672.4 1112.6,719.6" fill="#E0E0E0" /><polygon points="1103.7,479.0 1131.3,486.0 1113.8,704.2 1088.2,693.7" fill="url(#gLegL)" /><polygon points="1131.3,486.0 1170.0,465.3 1151.0,673.1 1113.8,704.2" fill="#ADADAD" /><polygon points="1103.7,479.0 1143.2,459.1 1170.0,465.3 1131.3,486.0" fill="#E4E4E4" /><polygon points="1133.3,488.4 1135.1,487.4 1118.1,695.3 1116.4,696.7" fill="#C9C9C9" /><circle cx="1142.0" cy="532.5" r="3.5" fill="#C2C2C2" stroke="#8C8C8C" stroke-width=".8"/><circle cx="1156.2" cy="517.4" r="3.4" fill="#C2C2C2" stroke="#8C8C8C" stroke-width=".8"/><circle cx="1132.2" cy="628.8" r="3.4" fill="#C2C2C2" stroke="#8C8C8C" stroke-width=".8"/><circle cx="1146.3" cy="612.3" r="3.3" fill="#C2C2C2" stroke="#8C8C8C" stroke-width=".8"/><polygon points="874.4,849.2 933.6,885.6 933.5,889.5 874.4,853.0" fill="#BDBDBD" /><polygon points="933.6,885.6 1029.4,802.2 1029.2,805.8 933.5,889.5" fill="#C4C4C4" /><polygon points="874.4,849.2 972.4,773.2 1029.4,802.2 933.6,885.6" fill="#E9E9E9" /><polygon points="883.7,844.8 932.0,874.1 932.0,876.1 883.7,846.7" fill="#C8C8C8" /><polygon points="932.0,874.1 1017.8,800.8 1017.7,802.6 932.0,876.1" fill="#CFCFCF" /><polygon points="883.7,844.8 971.0,776.8 1017.8,800.8 932.0,874.1" fill="#E0E0E0" /><polygon points="916.4,573.5 946.9,584.7 939.7,849.5 911.8,833.2" fill="url(#gLegL)" /><polygon points="946.9,584.7 1008.4,551.8 997.1,801.6 939.7,849.5" fill="#ADADAD" /><polygon points="916.4,573.5 978.7,542.1 1008.4,551.8 946.9,584.7" fill="#E4E4E4" /><polygon points="950.3,587.2 953.2,585.7 945.9,837.7 943.2,839.9" fill="#C9C9C9" /><circle cx="969.1" cy="638.5" r="4.4" fill="#C2C2C2" stroke="#8C8C8C" stroke-width=".8"/><circle cx="990.9" cy="617.2" r="4.3" fill="#C2C2C2" stroke="#8C8C8C" stroke-width=".8"/><circle cx="962.5" cy="755.4" r="4.2" fill="#C2C2C2" stroke="#8C8C8C" stroke-width=".8"/><circle cx="983.8" cy="732.1" r="4.1" fill="#C2C2C2" stroke="#8C8C8C" stroke-width=".8"/>
<polygon points="240.6,627.9 433.8,806.4 441.4,862.0 248.9,671.6" fill="#A6714F" /><polygon points="256.7,652.2 310.9,703.1 316.7,736.5 262.5,683.1" fill="#C4875F" /><polygon points="332.7,723.6 402.5,789.2 408.0,826.4 338.4,757.9" fill="#C4875F" /><polygon points="568.0,758.9 535.7,735.4 539.0,767.5 571.1,792.0" fill="#A6714F" /><polygon points="690.0,696.5 656.7,677.3 658.5,706.9 691.6,726.9" fill="#A6714F" /><polygon points="433.8,806.4 477.1,784.8 483.8,839.1 441.4,862.0" fill="#C4875F" /><polygon points="566.3,740.5 617.2,715.3 620.9,765.0 571.1,792.0" fill="#C4875F" /><polygon points="689.1,679.5 718.0,665.1 720.1,711.5 691.6,726.9" fill="#C4875F" /><polygon points="433.8,806.4 718.0,665.1 718.8,681.7 436.5,826.3" fill="#C4875F" /><polygon points="427.3,800.4 442.7,801.9 450.1,857.3 435.0,855.7" fill="#8E6344" /><polygon points="240.6,627.9 493.8,546.4 718.0,665.1 440.4,803.0 429.4,802.4" fill="#C4875F" /><polygon points="294.5,610.5 303.6,607.6 507.5,769.7 497.0,774.9" fill="#A06E4C" /><polygon points="291.2,611.0 305.2,606.5 309.5,610.0 295.5,614.6" fill="#B9D9B0" /><polygon points="348.8,593.1 357.3,590.3 568.7,739.3 559.1,744.1" fill="#A06E4C" /><polygon points="345.7,593.5 358.7,589.3 363.2,592.5 350.2,596.8" fill="#B9D9B0" /><polygon points="399.3,576.8 407.2,574.2 624.4,711.7 615.6,716.0" fill="#A06E4C" /><polygon points="396.3,577.2 408.5,573.3 413.2,576.3 401.1,580.3" fill="#B9D9B0" /><polygon points="446.5,561.6 453.9,559.2 675.3,686.4 667.3,690.4" fill="#A06E4C" /><polygon points="443.7,562.0 455.0,558.4 459.9,561.2 448.5,564.9" fill="#B9D9B0" /><polygon points="324.3,634.7 334.0,631.4 388.9,674.9 378.7,678.9" fill="#DDF3E2" /><polygon points="405.1,700.3 415.5,696.1 486.9,752.9 476.1,758.0" fill="#DDF3E2" /><polygon points="436.8,596.0 445.1,593.1 504.2,630.1 495.6,633.5" fill="#DDF3E2" /><polygon points="523.9,651.5 532.6,647.9 608.1,695.2 599.1,699.4" fill="#DDF3E2" />
<polygon points="432.9,520.3 491.9,503.2 496.5,545.5 438.5,564.2" fill="#00FF00" fill-opacity="0.088"/><polygon points="491.9,503.2 522.4,517.8 526.8,561.5 496.5,545.5" fill="#00FF00" fill-opacity="0.088"/><polygon points="438.5,564.2 496.5,545.5 526.8,561.5 467.9,581.6" fill="#00FF00" fill-opacity="0.088"/><polygon points="432.9,520.3 462.5,536.2 467.9,581.6 438.5,564.2" fill="#00FF00" fill-opacity="0.088"/><polygon points="462.5,536.2 522.4,517.8 526.8,561.5 467.9,581.6" fill="#00FF00" fill-opacity="0.088"/><polygon points="432.9,520.3 491.9,503.2 522.4,517.8 462.5,536.2" fill="#00FF00" fill-opacity="0.088"/><polygon points="426.1,466.3 486.3,451.4 491.0,495.0 431.8,511.7" fill="#00FF00" fill-opacity="0.088"/><polygon points="486.3,451.4 517.1,464.2 521.6,509.3 491.0,495.0" fill="#00FF00" fill-opacity="0.088"/><polygon points="431.8,511.7 491.0,495.0 521.6,509.3 461.5,527.3" fill="#00FF00" fill-opacity="0.088"/><polygon points="426.1,466.3 455.9,480.3 461.5,527.3 431.8,511.7" fill="#00FF00" fill-opacity="0.088"/><polygon points="455.9,480.3 517.1,464.2 521.6,509.3 461.5,527.3" fill="#00FF00" fill-opacity="0.088"/><polygon points="426.1,466.3 486.3,451.4 517.1,464.2 455.9,480.3" fill="#00FF00" fill-opacity="0.088"/><polygon points="333.9,548.9 401.4,529.4 407.5,574.2 341.2,595.5" fill="#00FF00" fill-opacity="0.088"/><polygon points="401.4,529.4 430.5,546.1 436.4,592.4 407.5,574.2" fill="#00FF00" fill-opacity="0.088"/><polygon points="341.2,595.5 407.5,574.2 436.4,592.4 368.7,615.6" fill="#00FF00" fill-opacity="0.088"/><polygon points="333.9,548.9 361.5,567.2 368.7,615.6 341.2,595.5" fill="#00FF00" fill-opacity="0.088"/><polygon points="361.5,567.2 430.5,546.1 436.4,592.4 368.7,615.6" fill="#00FF00" fill-opacity="0.088"/><polygon points="333.9,548.9 401.4,529.4 430.5,546.1 361.5,567.2" fill="#00FF00" fill-opacity="0.088"/><polygon points="419.1,410.6 480.5,397.9 485.3,442.9 425.0,457.5" fill="#00FF00" fill-opacity="0.088"/><polygon points="480.5,397.9 511.6,408.8 516.2,455.3 485.3,442.9" fill="#00FF00" fill-opacity="0.088"/><polygon points="425.0,457.5 485.3,442.9 516.2,455.3 454.9,471.1" fill="#00FF00" fill-opacity="0.088"/><polygon points="419.1,410.6 449.1,422.6 454.9,471.1 425.0,457.5" fill="#00FF00" fill-opacity="0.088"/><polygon points="449.1,422.6 511.6,408.8 516.2,455.3 454.9,471.1" fill="#00FF00" fill-opacity="0.088"/><polygon points="419.1,410.6 480.5,397.9 511.6,408.8 449.1,422.6" fill="#00FF00" fill-opacity="0.088"/><polygon points="411.8,353.1 474.5,342.8 479.5,389.1 417.9,401.5" fill="#00FF00" fill-opacity="0.088"/><polygon points="474.5,342.8 505.9,351.6 510.7,399.7 479.5,389.1" fill="#00FF00" fill-opacity="0.088"/><polygon points="417.9,401.5 479.5,389.1 510.7,399.7 448.0,413.1" fill="#00FF00" fill-opacity="0.088"/><polygon points="411.8,353.1 442.1,362.8 448.0,413.1 417.9,401.5" fill="#00FF00" fill-opacity="0.088"/><polygon points="442.1,362.8 505.9,351.6 510.7,399.7 448.0,413.1" fill="#00FF00" fill-opacity="0.088"/><polygon points="411.8,353.1 474.5,342.8 505.9,351.6 442.1,362.8" fill="#00FF00" fill-opacity="0.088"/><polygon points="324.9,491.5 393.9,474.3 400.2,520.6 332.5,539.7" fill="#00FF00" fill-opacity="0.088"/><polygon points="393.9,474.3 423.2,489.0 429.3,537.0 400.2,520.6" fill="#00FF00" fill-opacity="0.088"/><polygon points="332.5,539.7 400.2,520.6 429.3,537.0 360.1,557.7" fill="#00FF00" fill-opacity="0.088"/><polygon points="324.9,491.5 352.6,507.7 360.1,557.7 332.5,539.7" fill="#00FF00" fill-opacity="0.088"/><polygon points="352.6,507.7 423.2,489.0 429.3,537.0 360.1,557.7" fill="#00FF00" fill-opacity="0.088"/><polygon points="324.9,491.5 393.9,474.3 423.2,489.0 352.6,507.7" fill="#00FF00" fill-opacity="0.088"/><polygon points="221.5,581.3 299.4,558.8 307.4,606.4 231.1,631.0" fill="#00FF00" fill-opacity="0.088"/><polygon points="299.4,558.8 326.2,578.1 334.1,627.4 307.4,606.4" fill="#00FF00" fill-opacity="0.088"/><polygon points="231.1,631.0 307.4,606.4 334.1,627.4 255.7,654.2" fill="#00FF00" fill-opacity="0.088"/><polygon points="221.5,581.3 246.1,602.7 255.7,654.2 231.1,631.0" fill="#00FF00" fill-opacity="0.088"/><polygon points="246.1,602.7 326.2,578.1 334.1,627.4 255.7,654.2" fill="#00FF00" fill-opacity="0.088"/><polygon points="221.5,581.3 299.4,558.8 326.2,578.1 246.1,602.7" fill="#00FF00" fill-opacity="0.088"/><polygon points="470.3,540.4 530.4,521.6 534.7,565.7 475.6,586.2" fill="#00FF00" fill-opacity="0.088"/><polygon points="530.4,521.6 564.1,537.7 568.1,583.3 534.7,565.7" fill="#00FF00" fill-opacity="0.088"/><polygon points="475.6,586.2 534.7,565.7 568.1,583.3 508.2,605.5" fill="#00FF00" fill-opacity="0.088"/><polygon points="470.3,540.4 503.1,558.0 508.2,605.5 475.6,586.2" fill="#00FF00" fill-opacity="0.088"/><polygon points="503.1,558.0 564.1,537.7 568.1,583.3 508.2,605.5" fill="#00FF00" fill-opacity="0.088"/><polygon points="470.3,540.4 530.4,521.6 564.1,537.7 503.1,558.0" fill="#00FF00" fill-opacity="0.088"/><polygon points="315.6,432.1 386.2,417.5 392.7,465.3 323.4,482.0" fill="#00FF00" fill-opacity="0.088"/><polygon points="386.2,417.5 415.6,430.0 422.0,479.6 392.7,465.3" fill="#00FF00" fill-opacity="0.088"/><polygon points="323.4,482.0 392.7,465.3 422.0,479.6 351.1,497.8" fill="#00FF00" fill-opacity="0.088"/><polygon points="315.6,432.1 343.3,445.9 351.1,497.8 323.4,482.0" fill="#00FF00" fill-opacity="0.088"/><polygon points="343.3,445.9 415.6,430.0 422.0,479.6 351.1,497.8" fill="#00FF00" fill-opacity="0.088"/><polygon points="315.6,432.1 386.2,417.5 415.6,430.0 343.3,445.9" fill="#00FF00" fill-opacity="0.088"/><polygon points="209.7,520.1 289.6,500.3 297.9,549.5 219.6,571.6" fill="#00FF00" fill-opacity="0.088"/><polygon points="289.6,500.3 316.4,517.2 324.6,568.4 297.9,549.5" fill="#00FF00" fill-opacity="0.088"/><polygon points="219.6,571.6 297.9,549.5 324.6,568.4 244.2,592.5" fill="#00FF00" fill-opacity="0.088"/><polygon points="209.7,520.1 234.2,538.9 244.2,592.5 219.6,571.6" fill="#00FF00" fill-opacity="0.088"/><polygon points="234.2,538.9 316.4,517.2 324.6,568.4 244.2,592.5" fill="#00FF00" fill-opacity="0.088"/><polygon points="209.7,520.1 289.6,500.3 316.4,517.2 234.2,538.9" fill="#00FF00" fill-opacity="0.088"/><polygon points="463.8,484.0 525.2,467.5 529.6,513.0 469.3,531.4" fill="#00FF00" fill-opacity="0.088"/><polygon points="525.2,467.5 559.2,481.6 563.3,528.7 529.6,513.0" fill="#00FF00" fill-opacity="0.088"/><polygon points="469.3,531.4 529.6,513.0 563.3,528.7 502.1,548.7" fill="#00FF00" fill-opacity="0.088"/><polygon points="463.8,484.0 496.8,499.5 502.1,548.7 469.3,531.4" fill="#00FF00" fill-opacity="0.088"/><polygon points="496.8,499.5 559.2,481.6 563.3,528.7 502.1,548.7" fill="#00FF00" fill-opacity="0.088"/><polygon points="463.8,484.0 525.2,467.5 559.2,481.6 496.8,499.5" fill="#00FF00" fill-opacity="0.088"/><polygon points="305.9,370.6 378.2,358.7 384.9,408.1 314.0,422.3" fill="#00FF00" fill-opacity="0.088"/><polygon points="378.2,358.7 407.8,368.9 414.3,420.2 384.9,408.1" fill="#00FF00" fill-opacity="0.088"/><polygon points="314.0,422.3 384.9,408.1 414.3,420.2 341.8,435.7" fill="#00FF00" fill-opacity="0.088"/><polygon points="305.9,370.6 333.7,381.9 341.8,435.7 314.0,422.3" fill="#00FF00" fill-opacity="0.088"/><polygon points="333.7,381.9 407.8,368.9 414.3,420.2 341.8,435.7" fill="#00FF00" fill-opacity="0.088"/><polygon points="305.9,370.6 378.2,358.7 407.8,368.9 333.7,381.9" fill="#00FF00" fill-opacity="0.088"/><polygon points="368.8,572.1 438.1,550.4 444.0,597.2 376.0,620.9" fill="#00FF00" fill-opacity="0.088"/><polygon points="438.1,550.4 470.3,568.9 476.0,617.4 444.0,597.2" fill="#00FF00" fill-opacity="0.088"/><polygon points="376.0,620.9 444.0,597.2 476.0,617.4 406.6,643.2" fill="#00FF00" fill-opacity="0.088"/><polygon points="368.8,572.1 399.5,592.5 406.6,643.2 376.0,620.9" fill="#00FF00" fill-opacity="0.088"/><polygon points="399.5,592.5 470.3,568.9 476.0,617.4 406.6,643.2" fill="#00FF00" fill-opacity="0.088"/><polygon points="368.8,572.1 438.1,550.4 470.3,568.9 399.5,592.5" fill="#00FF00" fill-opacity="0.088"/><polygon points="197.5,456.6 279.4,439.6 288.0,490.6 207.8,510.0" fill="#00FF00" fill-opacity="0.088"/><polygon points="279.4,439.6 306.2,454.1 314.8,507.2 288.0,490.6" fill="#00FF00" fill-opacity="0.088"/><polygon points="207.8,510.0 288.0,490.6 314.8,507.2 232.2,528.4" fill="#00FF00" fill-opacity="0.088"/><polygon points="197.5,456.6 221.8,472.7 232.2,528.4 207.8,510.0" fill="#00FF00" fill-opacity="0.088"/><polygon points="221.8,472.7 306.2,454.1 314.8,507.2 232.2,528.4" fill="#00FF00" fill-opacity="0.088"/><polygon points="197.5,456.6 279.4,439.6 306.2,454.1 221.8,472.7" fill="#00FF00" fill-opacity="0.088"/><polygon points="457.0,425.7 519.7,411.7 524.3,458.6 462.7,474.7" fill="#00FF00" fill-opacity="0.088"/><polygon points="519.7,411.7 554.1,423.7 558.4,472.4 524.3,458.6" fill="#00FF00" fill-opacity="0.088"/><polygon points="462.7,474.7 524.3,458.6 558.4,472.4 495.8,489.9" fill="#00FF00" fill-opacity="0.088"/><polygon points="457.0,425.7 490.4,439.0 495.8,489.9 462.7,474.7" fill="#00FF00" fill-opacity="0.088"/><polygon points="490.4,439.0 554.1,423.7 558.4,472.4 495.8,489.9" fill="#00FF00" fill-opacity="0.088"/><polygon points="457.0,425.7 519.7,411.7 554.1,423.7 490.4,439.0" fill="#00FF00" fill-opacity="0.088"/><polygon points="184.7,390.6 268.8,376.7 277.7,429.6 195.4,446.1" fill="#00FF00" fill-opacity="0.088"/><polygon points="268.8,376.7 295.7,388.6 304.5,443.7 277.7,429.6" fill="#00FF00" fill-opacity="0.088"/><polygon points="195.4,446.1 277.7,429.6 304.5,443.7 219.8,461.7" fill="#00FF00" fill-opacity="0.088"/><polygon points="184.7,390.6 209.0,403.8 219.8,461.7 195.4,446.1" fill="#00FF00" fill-opacity="0.088"/><polygon points="209.0,403.8 295.7,388.6 304.5,443.7 219.8,461.7" fill="#00FF00" fill-opacity="0.088"/><polygon points="184.7,390.6 268.8,376.7 295.7,388.6 209.0,403.8" fill="#00FF00" fill-opacity="0.088"/><polygon points="450.0,365.4 514.1,353.9 518.8,402.5 455.9,416.1" fill="#00FF00" fill-opacity="0.088"/><polygon points="514.1,353.9 548.8,363.7 553.2,414.1 518.8,402.5" fill="#00FF00" fill-opacity="0.088"/><polygon points="455.9,416.1 518.8,402.5 553.2,414.1 489.3,429.0" fill="#00FF00" fill-opacity="0.088"/><polygon points="450.0,365.4 483.7,376.2 489.3,429.0 455.9,416.1" fill="#00FF00" fill-opacity="0.088"/><polygon points="483.7,376.2 548.8,363.7 553.2,414.1 489.3,429.0" fill="#00FF00" fill-opacity="0.088"/><polygon points="450.0,365.4 514.1,353.9 548.8,363.7 483.7,376.2" fill="#00FF00" fill-opacity="0.088"/><polygon points="359.9,511.9 430.8,492.9 436.9,541.3 367.3,562.5" fill="#00FF00" fill-opacity="0.088"/><polygon points="430.8,492.9 463.3,509.2 469.2,559.4 436.9,541.3" fill="#00FF00" fill-opacity="0.088"/><polygon points="367.3,562.5 436.9,541.3 469.2,559.4 398.1,582.6" fill="#00FF00" fill-opacity="0.088"/><polygon points="359.9,511.9 390.8,530.0 398.1,582.6 367.3,562.5" fill="#00FF00" fill-opacity="0.088"/><polygon points="390.8,530.0 463.3,509.2 469.2,559.4 398.1,582.6" fill="#00FF00" fill-opacity="0.088"/><polygon points="359.9,511.9 430.8,492.9 463.3,509.2 390.8,530.0" fill="#00FF00" fill-opacity="0.088"/><polygon points="511.7,562.7 572.9,541.9 576.9,587.9 516.7,610.6" fill="#00FF00" fill-opacity="0.088"/><polygon points="572.9,541.9 610.2,559.7 613.7,607.3 576.9,587.9" fill="#00FF00" fill-opacity="0.088"/><polygon points="516.7,610.6 576.9,587.9 613.7,607.3 552.8,632.0" fill="#00FF00" fill-opacity="0.088"/><polygon points="511.7,562.7 548.1,582.3 552.8,632.0 516.7,610.6" fill="#00FF00" fill-opacity="0.088"/><polygon points="548.1,582.3 610.2,559.7 613.7,607.3 552.8,632.0" fill="#00FF00" fill-opacity="0.088"/><polygon points="511.7,562.7 572.9,541.9 610.2,559.7 548.1,582.3" fill="#00FF00" fill-opacity="0.088"/><polygon points="252.6,608.3 333.2,583.2 341.1,633.0 262.2,660.4" fill="#00FF00" fill-opacity="0.088"/><polygon points="333.2,583.2 363.1,604.7 370.9,656.4 341.1,633.0" fill="#00FF00" fill-opacity="0.088"/><polygon points="262.2,660.4 341.1,633.0 370.9,656.4 289.8,686.5" fill="#00FF00" fill-opacity="0.088"/><polygon points="252.6,608.3 280.2,632.3 289.8,686.5 262.2,660.4" fill="#00FF00" fill-opacity="0.088"/><polygon points="280.2,632.3 363.1,604.7 370.9,656.4 289.8,686.5" fill="#00FF00" fill-opacity="0.088"/><polygon points="252.6,608.3 333.2,583.2 363.1,604.7 280.2,632.3" fill="#00FF00" fill-opacity="0.088"/><polygon points="350.7,449.6 423.3,433.3 429.6,483.4 358.4,502.0" fill="#00FF00" fill-opacity="0.088"/><polygon points="423.3,433.3 456.0,447.2 462.1,499.3 429.6,483.4" fill="#00FF00" fill-opacity="0.088"/><polygon points="358.4,502.0 429.6,483.4 462.1,499.3 389.3,519.6" fill="#00FF00" fill-opacity="0.088"/><polygon points="350.7,449.6 381.7,465.0 389.3,519.6 358.4,502.0" fill="#00FF00" fill-opacity="0.088"/><polygon points="381.7,465.0 456.0,447.2 462.1,499.3 389.3,519.6" fill="#00FF00" fill-opacity="0.088"/><polygon points="350.7,449.6 423.3,433.3 456.0,447.2 381.7,465.0" fill="#00FF00" fill-opacity="0.088"/><polygon points="505.6,503.6 568.1,485.4 572.2,532.9 510.7,553.2" fill="#00FF00" fill-opacity="0.088"/><polygon points="568.1,485.4 605.8,501.0 609.5,550.3 572.2,532.9" fill="#00FF00" fill-opacity="0.088"/><polygon points="510.7,553.2 572.2,532.9 609.5,550.3 547.2,572.5" fill="#00FF00" fill-opacity="0.088"/><polygon points="505.6,503.6 542.4,520.9 547.2,572.5 510.7,553.2" fill="#00FF00" fill-opacity="0.088"/><polygon points="542.4,520.9 605.8,501.0 609.5,550.3 547.2,572.5" fill="#00FF00" fill-opacity="0.088"/><polygon points="505.6,503.6 568.1,485.4 605.8,501.0 542.4,520.9" fill="#00FF00" fill-opacity="0.088"/><polygon points="240.7,543.9 323.4,521.7 331.7,573.4 250.7,598.1" fill="#00FF00" fill-opacity="0.088"/><polygon points="323.4,521.7 353.4,540.7 361.5,594.5 331.7,573.4" fill="#00FF00" fill-opacity="0.088"/><polygon points="250.7,598.1 331.7,573.4 361.5,594.5 278.3,621.6" fill="#00FF00" fill-opacity="0.088"/><polygon points="240.7,543.9 268.2,565.2 278.3,621.6 250.7,598.1" fill="#00FF00" fill-opacity="0.088"/><polygon points="268.2,565.2 353.4,540.7 361.5,594.5 278.3,621.6" fill="#00FF00" fill-opacity="0.088"/><polygon points="240.7,543.9 323.4,521.7 353.4,540.7 268.2,565.2" fill="#00FF00" fill-opacity="0.088"/><polygon points="341.1,384.8 415.6,371.5 422.1,423.4 349.1,439.3" fill="#00FF00" fill-opacity="0.088"/><polygon points="415.6,371.5 448.5,382.9 454.8,437.0 422.1,423.4" fill="#00FF00" fill-opacity="0.088"/><polygon points="349.1,439.3 422.1,423.4 454.8,437.0 380.2,454.3" fill="#00FF00" fill-opacity="0.088"/><polygon points="341.1,384.8 372.3,397.5 380.2,454.3 349.1,439.3" fill="#00FF00" fill-opacity="0.088"/><polygon points="372.3,397.5 448.5,382.9 454.8,437.0 380.2,454.3" fill="#00FF00" fill-opacity="0.088"/><polygon points="341.1,384.8 415.6,371.5 448.5,382.9 372.3,397.5" fill="#00FF00" fill-opacity="0.088"/><polygon points="407.6,597.9 478.8,573.8 484.4,622.8 414.6,649.1" fill="#00FF00" fill-opacity="0.088"/><polygon points="478.8,573.8 514.7,594.4 520.0,645.3 484.4,622.8" fill="#00FF00" fill-opacity="0.088"/><polygon points="414.6,649.1 484.4,622.8 520.0,645.3 448.9,674.1" fill="#00FF00" fill-opacity="0.088"/><polygon points="407.6,597.9 442.1,620.9 448.9,674.1 414.6,649.1" fill="#00FF00" fill-opacity="0.088"/><polygon points="442.1,620.9 514.7,594.4 520.0,645.3 448.9,674.1" fill="#00FF00" fill-opacity="0.088"/><polygon points="407.6,597.9 478.8,573.8 514.7,594.4 442.1,620.9" fill="#00FF00" fill-opacity="0.088"/><polygon points="499.2,442.5 563.1,426.9 567.3,476.0 504.5,493.9" fill="#00FF00" fill-opacity="0.088"/><polygon points="563.1,426.9 601.2,440.2 605.1,491.3 567.3,476.0" fill="#00FF00" fill-opacity="0.088"/><polygon points="504.5,493.9 567.3,476.0 605.1,491.3 541.4,510.8" fill="#00FF00" fill-opacity="0.088"/><polygon points="499.2,442.5 536.4,457.3 541.4,510.8 504.5,493.9" fill="#00FF00" fill-opacity="0.088"/><polygon points="536.4,457.3 601.2,440.2 605.1,491.3 541.4,510.8" fill="#00FF00" fill-opacity="0.088"/><polygon points="499.2,442.5 563.1,426.9 601.2,440.2 536.4,457.3" fill="#00FF00" fill-opacity="0.088"/><polygon points="228.3,477.0 313.3,457.9 321.8,511.6 238.7,533.3" fill="#00FF00" fill-opacity="0.088"/><polygon points="313.3,457.9 343.4,474.2 351.8,530.1 321.8,511.6" fill="#00FF00" fill-opacity="0.088"/><polygon points="238.7,533.3 321.8,511.6 351.8,530.1 266.3,554.1" fill="#00FF00" fill-opacity="0.088"/><polygon points="228.3,477.0 255.8,495.2 266.3,554.1 238.7,533.3" fill="#00FF00" fill-opacity="0.088"/><polygon points="255.8,495.2 343.4,474.2 351.8,530.1 266.3,554.1" fill="#00FF00" fill-opacity="0.088"/><polygon points="228.3,477.0 313.3,457.9 343.4,474.2 255.8,495.2" fill="#00FF00" fill-opacity="0.088"/><polygon points="492.6,379.0 558.0,366.3 562.3,417.2 498.1,432.4" fill="#00FF00" fill-opacity="0.088"/><polygon points="558.0,366.3 596.5,377.2 600.5,430.2 562.3,417.2" fill="#00FF00" fill-opacity="0.088"/><polygon points="498.1,432.4 562.3,417.2 600.5,430.2 535.4,446.7" fill="#00FF00" fill-opacity="0.088"/><polygon points="492.6,379.0 530.2,391.1 535.4,446.7 498.1,432.4" fill="#00FF00" fill-opacity="0.088"/><polygon points="530.2,391.1 596.5,377.2 600.5,430.2 535.4,446.7" fill="#00FF00" fill-opacity="0.088"/><polygon points="492.6,379.0 558.0,366.3 596.5,377.2 530.2,391.1" fill="#00FF00" fill-opacity="0.088"/><polygon points="557.7,587.4 620.0,564.3 623.4,612.4 562.3,637.6" fill="#00FF00" fill-opacity="0.088"/><polygon points="620.0,564.3 661.4,584.1 664.3,634.0 623.4,612.4" fill="#00FF00" fill-opacity="0.088"/><polygon points="562.3,637.6 623.4,612.4 664.3,634.0 602.6,661.5" fill="#00FF00" fill-opacity="0.088"/><polygon points="557.7,587.4 598.5,609.3 602.6,661.5 562.3,637.6" fill="#00FF00" fill-opacity="0.088"/><polygon points="598.5,609.3 661.4,584.1 664.3,634.0 602.6,661.5" fill="#00FF00" fill-opacity="0.088"/><polygon points="557.7,587.4 620.0,564.3 661.4,584.1 598.5,609.3" fill="#00FF00" fill-opacity="0.088"/><polygon points="399.0,534.8 471.9,513.5 477.7,564.2 406.2,587.9" fill="#00FF00" fill-opacity="0.088"/><polygon points="471.9,513.5 508.1,531.7 513.6,584.5 477.7,564.2" fill="#00FF00" fill-opacity="0.088"/><polygon points="406.2,587.9 477.7,564.2 513.6,584.5 440.7,610.4" fill="#00FF00" fill-opacity="0.088"/><polygon points="399.0,534.8 433.7,555.1 440.7,610.4 406.2,587.9" fill="#00FF00" fill-opacity="0.088"/><polygon points="433.7,555.1 508.1,531.7 513.6,584.5 440.7,610.4" fill="#00FF00" fill-opacity="0.088"/><polygon points="399.0,534.8 471.9,513.5 508.1,531.7 433.7,555.1" fill="#00FF00" fill-opacity="0.088"/><polygon points="215.4,407.3 302.8,391.7 311.6,447.4 226.2,465.9" fill="#00FF00" fill-opacity="0.088"/><polygon points="302.8,391.7 333.0,405.0 341.7,463.2 311.6,447.4" fill="#00FF00" fill-opacity="0.088"/><polygon points="226.2,465.9 311.6,447.4 341.7,463.2 253.7,483.6" fill="#00FF00" fill-opacity="0.088"/><polygon points="215.4,407.3 242.8,422.3 253.7,483.6 226.2,465.9" fill="#00FF00" fill-opacity="0.088"/><polygon points="242.8,422.3 333.0,405.0 341.7,463.2 253.7,483.6" fill="#00FF00" fill-opacity="0.088"/><polygon points="215.4,407.3 302.8,391.7 333.0,405.0 242.8,422.3" fill="#00FF00" fill-opacity="0.088"/><polygon points="287.5,638.7 371.0,610.4 378.8,662.6 297.1,693.4" fill="#00FF00" fill-opacity="0.088"/><polygon points="371.0,610.4 404.6,634.5 412.2,688.9 378.8,662.6" fill="#00FF00" fill-opacity="0.088"/><polygon points="297.1,693.4 378.8,662.6 412.2,688.9 328.3,722.9" fill="#00FF00" fill-opacity="0.088"/><polygon points="287.5,638.7 318.7,665.8 328.3,722.9 297.1,693.4" fill="#00FF00" fill-opacity="0.088"/><polygon points="318.7,665.8 404.6,634.5 412.2,688.9 328.3,722.9" fill="#00FF00" fill-opacity="0.088"/><polygon points="287.5,638.7 371.0,610.4 404.6,634.5 318.7,665.8" fill="#00FF00" fill-opacity="0.088"/><polygon points="552.1,525.5 615.7,505.1 619.3,554.9 556.8,577.6" fill="#00FF00" fill-opacity="0.088"/><polygon points="615.7,505.1 657.7,522.5 660.8,574.3 619.3,554.9" fill="#00FF00" fill-opacity="0.088"/><polygon points="556.8,577.6 619.3,554.9 660.8,574.3 597.7,599.1" fill="#00FF00" fill-opacity="0.088"/><polygon points="552.1,525.5 593.4,544.9 597.7,599.1 556.8,577.6" fill="#00FF00" fill-opacity="0.088"/><polygon points="593.4,544.9 657.7,522.5 660.8,574.3 597.7,599.1" fill="#00FF00" fill-opacity="0.088"/><polygon points="552.1,525.5 615.7,505.1 657.7,522.5 593.4,544.9" fill="#00FF00" fill-opacity="0.088"/><polygon points="390.0,469.1 464.7,450.9 470.7,503.5 397.5,524.3" fill="#00FF00" fill-opacity="0.088"/><polygon points="464.7,450.9 501.3,466.5 507.0,521.3 470.7,503.5" fill="#00FF00" fill-opacity="0.088"/><polygon points="397.5,524.3 470.7,503.5 507.0,521.3 432.3,544.2" fill="#00FF00" fill-opacity="0.088"/><polygon points="390.0,469.1 425.0,486.5 432.3,544.2 397.5,524.3" fill="#00FF00" fill-opacity="0.088"/><polygon points="425.0,486.5 501.3,466.5 507.0,521.3 432.3,544.2" fill="#00FF00" fill-opacity="0.088"/><polygon points="390.0,469.1 464.7,450.9 501.3,466.5 425.0,486.5" fill="#00FF00" fill-opacity="0.088"/><polygon points="275.6,570.8 361.4,545.8 369.5,600.1 285.6,627.9" fill="#00FF00" fill-opacity="0.088"/><polygon points="361.4,545.8 395.2,567.2 403.1,623.8 369.5,600.1" fill="#00FF00" fill-opacity="0.088"/><polygon points="285.6,627.9 369.5,600.1 403.1,623.8 316.9,654.5" fill="#00FF00" fill-opacity="0.088"/><polygon points="275.6,570.8 306.9,594.9 316.9,654.5 285.6,627.9" fill="#00FF00" fill-opacity="0.088"/><polygon points="306.9,594.9 395.2,567.2 403.1,623.8 316.9,654.5" fill="#00FF00" fill-opacity="0.088"/><polygon points="275.6,570.8 361.4,545.8 395.2,567.2 306.9,594.9" fill="#00FF00" fill-opacity="0.088"/><polygon points="380.6,400.9 457.2,385.9 463.5,440.5 388.5,458.3" fill="#00FF00" fill-opacity="0.088"/><polygon points="457.2,385.9 494.2,398.7 500.2,455.7 463.5,440.5" fill="#00FF00" fill-opacity="0.088"/><polygon points="388.5,458.3 463.5,440.5 500.2,455.7 423.5,475.2" fill="#00FF00" fill-opacity="0.088"/><polygon points="380.6,400.9 415.8,415.1 423.5,475.2 388.5,458.3" fill="#00FF00" fill-opacity="0.088"/><polygon points="415.8,415.1 494.2,398.7 500.2,455.7 423.5,475.2" fill="#00FF00" fill-opacity="0.088"/><polygon points="380.6,400.9 457.2,385.9 494.2,398.7 415.8,415.1" fill="#00FF00" fill-opacity="0.088"/><polygon points="451.2,627.0 524.1,599.9 529.4,651.2 457.9,680.7" fill="#00FF00" fill-opacity="0.088"/><polygon points="524.1,599.9 564.4,623.0 569.2,676.4 529.4,651.2" fill="#00FF00" fill-opacity="0.088"/><polygon points="457.9,680.7 529.4,651.2 569.2,676.4 496.5,708.9" fill="#00FF00" fill-opacity="0.088"/><polygon points="451.2,627.0 490.1,652.9 496.5,708.9 457.9,680.7" fill="#00FF00" fill-opacity="0.088"/><polygon points="490.1,652.9 564.4,623.0 569.2,676.4 496.5,708.9" fill="#00FF00" fill-opacity="0.088"/><polygon points="451.2,627.0 524.1,599.9 564.4,623.0 490.1,652.9" fill="#00FF00" fill-opacity="0.088"/><polygon points="546.2,461.2 611.3,443.7 615.0,495.3 551.2,515.2" fill="#00FF00" fill-opacity="0.088"/><polygon points="611.3,443.7 653.9,458.6 657.1,512.4 615.0,495.3" fill="#00FF00" fill-opacity="0.088"/><polygon points="551.2,515.2 615.0,495.3 657.1,512.4 592.5,534.2" fill="#00FF00" fill-opacity="0.088"/><polygon points="546.2,461.2 588.1,477.8 592.5,534.2 551.2,515.2" fill="#00FF00" fill-opacity="0.088"/><polygon points="588.1,477.8 653.9,458.6 657.1,512.4 592.5,534.2" fill="#00FF00" fill-opacity="0.088"/><polygon points="546.2,461.2 611.3,443.7 653.9,458.6 588.1,477.8" fill="#00FF00" fill-opacity="0.088"/><polygon points="609.3,615.1 672.3,589.3 675.1,639.7 613.3,667.8" fill="#00FF00" fill-opacity="0.088"/><polygon points="672.3,589.3 718.6,611.4 720.8,663.7 675.1,639.7" fill="#00FF00" fill-opacity="0.088"/><polygon points="613.3,667.8 675.1,639.7 720.8,663.7 658.6,694.7" fill="#00FF00" fill-opacity="0.088"/><polygon points="609.3,615.1 655.1,639.8 658.6,694.7 613.3,667.8" fill="#00FF00" fill-opacity="0.088"/><polygon points="655.1,639.8 718.6,611.4 720.8,663.7 658.6,694.7" fill="#00FF00" fill-opacity="0.088"/><polygon points="609.3,615.1 672.3,589.3 718.6,611.4 655.1,639.8" fill="#00FF00" fill-opacity="0.088"/><polygon points="263.1,500.1 351.4,478.5 359.8,535.1 273.6,559.6" fill="#00FF00" fill-opacity="0.088"/><polygon points="351.4,478.5 385.4,496.9 393.6,556.0 359.8,535.1" fill="#00FF00" fill-opacity="0.088"/><polygon points="273.6,559.6 359.8,535.1 393.6,556.0 304.9,583.2" fill="#00FF00" fill-opacity="0.088"/><polygon points="263.1,500.1 294.4,520.8 304.9,583.2 273.6,559.6" fill="#00FF00" fill-opacity="0.088"/><polygon points="294.4,520.8 385.4,496.9 393.6,556.0 304.9,583.2" fill="#00FF00" fill-opacity="0.088"/><polygon points="263.1,500.1 351.4,478.5 385.4,496.9 294.4,520.8" fill="#00FF00" fill-opacity="0.088"/><polygon points="540.2,394.3 606.7,380.1 610.6,433.6 545.3,450.5" fill="#00FF00" fill-opacity="0.088"/><polygon points="606.7,380.1 649.9,392.3 653.3,448.1 610.6,433.6" fill="#00FF00" fill-opacity="0.088"/><polygon points="545.3,450.5 610.6,433.6 653.3,448.1 587.2,466.7" fill="#00FF00" fill-opacity="0.088"/><polygon points="540.2,394.3 582.5,407.9 587.2,466.7 545.3,450.5" fill="#00FF00" fill-opacity="0.088"/><polygon points="582.5,407.9 649.9,392.3 653.3,448.1 587.2,466.7" fill="#00FF00" fill-opacity="0.088"/><polygon points="540.2,394.3 606.7,380.1 649.9,392.3 582.5,407.9" fill="#00FF00" fill-opacity="0.088"/><polygon points="442.9,560.5 517.7,536.5 523.1,589.8 449.9,616.4" fill="#00FF00" fill-opacity="0.088"/><polygon points="517.7,536.5 558.4,557.0 563.4,612.5 523.1,589.8" fill="#00FF00" fill-opacity="0.088"/><polygon points="449.9,616.4 523.1,589.8 563.4,612.5 488.9,641.8" fill="#00FF00" fill-opacity="0.088"/><polygon points="442.9,560.5 482.2,583.4 488.9,641.8 449.9,616.4" fill="#00FF00" fill-opacity="0.088"/><polygon points="482.2,583.4 558.4,557.0 563.4,612.5 488.9,641.8" fill="#00FF00" fill-opacity="0.088"/><polygon points="442.9,560.5 517.7,536.5 558.4,557.0 482.2,583.4" fill="#00FF00" fill-opacity="0.088"/><polygon points="250.2,426.3 341.0,408.6 349.7,467.4 261.1,488.4" fill="#00FF00" fill-opacity="0.088"/><polygon points="341.0,408.6 375.2,423.7 383.8,485.3 349.7,467.4" fill="#00FF00" fill-opacity="0.088"/><polygon points="261.1,488.4 349.7,467.4 383.8,485.3 292.4,508.5" fill="#00FF00" fill-opacity="0.088"/><polygon points="250.2,426.3 281.5,443.3 292.4,508.5 261.1,488.4" fill="#00FF00" fill-opacity="0.088"/><polygon points="281.5,443.3 375.2,423.7 383.8,485.3 292.4,508.5" fill="#00FF00" fill-opacity="0.088"/><polygon points="250.2,426.3 341.0,408.6 375.2,423.7 281.5,443.3" fill="#00FF00" fill-opacity="0.088"/><polygon points="327.1,673.0 413.5,641.0 421.0,695.9 336.6,730.8" fill="#00FF00" fill-opacity="0.088"/><polygon points="413.5,641.0 451.6,668.4 458.8,725.7 421.0,695.9" fill="#00FF00" fill-opacity="0.088"/><polygon points="336.6,730.8 421.0,695.9 458.8,725.7 372.1,764.4" fill="#00FF00" fill-opacity="0.088"/><polygon points="327.1,673.0 362.8,704.0 372.1,764.4 336.6,730.8" fill="#00FF00" fill-opacity="0.088"/><polygon points="362.8,704.0 451.6,668.4 458.8,725.7 372.1,764.4" fill="#00FF00" fill-opacity="0.088"/><polygon points="327.1,673.0 413.5,641.0 451.6,668.4 362.8,704.0" fill="#00FF00" fill-opacity="0.088"/><polygon points="604.3,550.0 668.8,527.1 671.7,579.4 608.5,604.8" fill="#00FF00" fill-opacity="0.088"/><polygon points="668.8,527.1 715.9,546.7 718.2,601.1 671.7,579.4" fill="#00FF00" fill-opacity="0.088"/><polygon points="608.5,604.8 671.7,579.4 718.2,601.1 654.5,629.0" fill="#00FF00" fill-opacity="0.088"/><polygon points="604.3,550.0 650.9,571.9 654.5,629.0 608.5,604.8" fill="#00FF00" fill-opacity="0.088"/><polygon points="650.9,571.9 715.9,546.7 718.2,601.1 654.5,629.0" fill="#00FF00" fill-opacity="0.088"/><polygon points="604.3,550.0 668.8,527.1 715.9,546.7 650.9,571.9" fill="#00FF00" fill-opacity="0.088"/><polygon points="434.3,491.2 511.0,470.6 516.6,526.0 441.5,549.4" fill="#00FF00" fill-opacity="0.088"/><polygon points="511.0,470.6 552.3,488.2 557.5,546.0 516.6,526.0" fill="#00FF00" fill-opacity="0.088"/><polygon points="441.5,549.4 516.6,526.0 557.5,546.0 480.9,571.9" fill="#00FF00" fill-opacity="0.088"/><polygon points="434.3,491.2 474.0,510.9 480.9,571.9 441.5,549.4" fill="#00FF00" fill-opacity="0.088"/><polygon points="474.0,510.9 552.3,488.2 557.5,546.0 480.9,571.9" fill="#00FF00" fill-opacity="0.088"/><polygon points="434.3,491.2 511.0,470.6 552.3,488.2 474.0,510.9" fill="#00FF00" fill-opacity="0.088"/><polygon points="500.5,659.8 575.1,629.2 579.8,683.1 506.8,716.4" fill="#00FF00" fill-opacity="0.088"/><polygon points="575.1,629.2 620.5,655.3 624.7,711.5 579.8,683.1" fill="#00FF00" fill-opacity="0.088"/><polygon points="506.8,716.4 579.8,683.1 624.7,711.5 550.6,748.3" fill="#00FF00" fill-opacity="0.088"/><polygon points="500.5,659.8 544.8,689.2 550.6,748.3 506.8,716.4" fill="#00FF00" fill-opacity="0.088"/><polygon points="544.8,689.2 620.5,655.3 624.7,711.5 550.6,748.3" fill="#00FF00" fill-opacity="0.088"/><polygon points="500.5,659.8 575.1,629.2 620.5,655.3 544.8,689.2" fill="#00FF00" fill-opacity="0.088"/><polygon points="315.2,601.4 404.2,572.9 412.0,630.1 325.2,661.7" fill="#00FF00" fill-opacity="0.088"/><polygon points="404.2,572.9 442.6,597.2 450.1,657.1 412.0,630.1" fill="#00FF00" fill-opacity="0.088"/><polygon points="325.2,661.7 412.0,630.1 450.1,657.1 360.9,692.1" fill="#00FF00" fill-opacity="0.088"/><polygon points="315.2,601.4 351.1,629.0 360.9,692.1 325.2,661.7" fill="#00FF00" fill-opacity="0.088"/><polygon points="351.1,629.0 442.6,597.2 450.1,657.1 360.9,692.1" fill="#00FF00" fill-opacity="0.088"/><polygon points="315.2,601.4 404.2,572.9 442.6,597.2 351.1,629.0" fill="#00FF00" fill-opacity="0.088"/><polygon points="599.2,482.2 665.1,462.6 668.2,516.9 603.5,539.2" fill="#00FF00" fill-opacity="0.088"/><polygon points="665.1,462.6 713.0,479.3 715.4,536.0 668.2,516.9" fill="#00FF00" fill-opacity="0.088"/><polygon points="603.5,539.2 668.2,516.9 715.4,536.0 650.2,560.6" fill="#00FF00" fill-opacity="0.088"/><polygon points="599.2,482.2 646.5,501.0 650.2,560.6 603.5,539.2" fill="#00FF00" fill-opacity="0.088"/><polygon points="646.5,501.0 713.0,479.3 715.4,536.0 650.2,560.6" fill="#00FF00" fill-opacity="0.088"/><polygon points="599.2,482.2 665.1,462.6 713.0,479.3 646.5,501.0" fill="#00FF00" fill-opacity="0.088"/><polygon points="425.2,418.9 504.0,402.1 509.9,459.7 432.8,479.7" fill="#00FF00" fill-opacity="0.088"/><polygon points="504.0,402.1 545.8,416.5 551.2,476.8 509.9,459.7" fill="#00FF00" fill-opacity="0.088"/><polygon points="432.8,479.7 509.9,459.7 551.2,476.8 472.6,498.9" fill="#00FF00" fill-opacity="0.088"/><polygon points="425.2,418.9 465.3,435.2 472.6,498.9 432.8,479.7" fill="#00FF00" fill-opacity="0.088"/><polygon points="465.3,435.2 545.8,416.5 551.2,476.8 472.6,498.9" fill="#00FF00" fill-opacity="0.088"/><polygon points="425.2,418.9 504.0,402.1 545.8,416.5 465.3,435.2" fill="#00FF00" fill-opacity="0.088"/><polygon points="593.8,411.6 661.4,395.5 664.5,451.9 598.3,471.0" fill="#00FF00" fill-opacity="0.088"/><polygon points="661.4,395.5 710.0,409.2 712.5,468.2 664.5,451.9" fill="#00FF00" fill-opacity="0.088"/><polygon points="598.3,471.0 664.5,451.9 712.5,468.2 645.7,489.2" fill="#00FF00" fill-opacity="0.088"/><polygon points="593.8,411.6 641.8,427.0 645.7,489.2 598.3,471.0" fill="#00FF00" fill-opacity="0.088"/><polygon points="641.8,427.0 710.0,409.2 712.5,468.2 645.7,489.2" fill="#00FF00" fill-opacity="0.088"/><polygon points="593.8,411.6 661.4,395.5 710.0,409.2 641.8,427.0" fill="#00FF00" fill-opacity="0.088"/><polygon points="302.8,526.4 394.4,501.8 402.6,561.6 313.3,589.5" fill="#00FF00" fill-opacity="0.088"/><polygon points="394.4,501.8 433.2,522.8 441.1,585.4 402.6,561.6" fill="#00FF00" fill-opacity="0.088"/><polygon points="313.3,589.5 402.6,561.6 441.1,585.4 349.1,616.5" fill="#00FF00" fill-opacity="0.088"/><polygon points="302.8,526.4 338.8,550.2 349.1,616.5 313.3,589.5" fill="#00FF00" fill-opacity="0.088"/><polygon points="338.8,550.2 433.2,522.8 441.1,585.4 349.1,616.5" fill="#00FF00" fill-opacity="0.088"/><polygon points="302.8,526.4 394.4,501.8 433.2,522.8 338.8,550.2" fill="#00FF00" fill-opacity="0.088"/><polygon points="492.7,589.6 569.3,562.4 574.2,618.6 499.2,648.6" fill="#00FF00" fill-opacity="0.088"/><polygon points="569.3,562.4 615.4,585.6 619.7,644.2 574.2,618.6" fill="#00FF00" fill-opacity="0.088"/><polygon points="499.2,648.6 574.2,618.6 619.7,644.2 543.6,677.6" fill="#00FF00" fill-opacity="0.088"/><polygon points="492.7,589.6 537.6,615.8 543.6,677.6 499.2,648.6" fill="#00FF00" fill-opacity="0.088"/><polygon points="537.6,615.8 615.4,585.6 619.7,644.2 543.6,677.6" fill="#00FF00" fill-opacity="0.088"/><polygon points="492.7,589.6 569.3,562.4 615.4,585.6 537.6,615.8" fill="#00FF00" fill-opacity="0.088"/><polygon points="372.3,712.3 461.7,675.7 468.9,733.6 381.7,773.3" fill="#00FF00" fill-opacity="0.088"/><polygon points="461.7,675.7 505.2,707.0 511.9,767.5 468.9,733.6" fill="#00FF00" fill-opacity="0.088"/><polygon points="381.7,773.3 468.9,733.6 511.9,767.5 422.5,812.0" fill="#00FF00" fill-opacity="0.088"/><polygon points="372.3,712.3 413.4,748.1 422.5,812.0 381.7,773.3" fill="#00FF00" fill-opacity="0.088"/><polygon points="413.4,748.1 505.2,707.0 511.9,767.5 422.5,812.0" fill="#00FF00" fill-opacity="0.088"/><polygon points="372.3,712.3 461.7,675.7 505.2,707.0 413.4,748.1" fill="#00FF00" fill-opacity="0.088"/><polygon points="289.8,447.9 384.3,427.7 392.8,490.1 300.8,513.9" fill="#00FF00" fill-opacity="0.088"/><polygon points="384.3,427.7 423.3,445.0 431.6,510.4 392.8,490.1" fill="#00FF00" fill-opacity="0.088"/><polygon points="300.8,513.9 392.8,490.1 431.6,510.4 336.8,537.1" fill="#00FF00" fill-opacity="0.088"/><polygon points="289.8,447.9 325.9,467.6 336.8,537.1 300.8,513.9" fill="#00FF00" fill-opacity="0.088"/><polygon points="325.9,467.6 423.3,445.0 431.6,510.4 336.8,537.1" fill="#00FF00" fill-opacity="0.088"/><polygon points="289.8,447.9 384.3,427.7 423.3,445.0 325.9,467.6" fill="#00FF00" fill-opacity="0.088"/><polygon points="484.6,516.2 563.2,492.9 568.3,551.4 491.4,577.9" fill="#00FF00" fill-opacity="0.088"/><polygon points="563.2,492.9 610.1,512.8 614.6,574.0 568.3,551.4" fill="#00FF00" fill-opacity="0.088"/><polygon points="491.4,577.9 568.3,551.4 614.6,574.0 536.4,603.6" fill="#00FF00" fill-opacity="0.088"/><polygon points="484.6,516.2 530.0,538.8 536.4,603.6 491.4,577.9" fill="#00FF00" fill-opacity="0.088"/><polygon points="530.0,538.8 610.1,512.8 614.6,574.0 536.4,603.6" fill="#00FF00" fill-opacity="0.088"/><polygon points="484.6,516.2 563.2,492.9 610.1,512.8 530.0,538.8" fill="#00FF00" fill-opacity="0.088"/><polygon points="360.7,636.4 452.8,603.7 460.3,664.2 370.5,700.3" fill="#00FF00" fill-opacity="0.088"/><polygon points="452.8,603.7 496.8,631.6 503.8,695.0 460.3,664.2" fill="#00FF00" fill-opacity="0.088"/><polygon points="370.5,700.3 460.3,664.2 503.8,695.0 411.6,735.4" fill="#00FF00" fill-opacity="0.088"/><polygon points="360.7,636.4 402.1,668.3 411.6,735.4 370.5,700.3" fill="#00FF00" fill-opacity="0.088"/><polygon points="402.1,668.3 496.8,631.6 503.8,695.0 411.6,735.4" fill="#00FF00" fill-opacity="0.088"/><polygon points="360.7,636.4 452.8,603.7 496.8,631.6 402.1,668.3" fill="#00FF00" fill-opacity="0.088"/><polygon points="476.1,439.5 556.9,420.3 562.2,481.3 483.2,504.0" fill="#00FF00" fill-opacity="0.088"/><polygon points="556.9,420.3 604.5,436.7 609.2,500.7 562.2,481.3" fill="#00FF00" fill-opacity="0.088"/><polygon points="483.2,504.0 562.2,481.3 609.2,500.7 528.8,526.1" fill="#00FF00" fill-opacity="0.088"/><polygon points="476.1,439.5 522.1,458.2 528.8,526.1 483.2,504.0" fill="#00FF00" fill-opacity="0.088"/><polygon points="522.1,458.2 604.5,436.7 609.2,500.7 528.8,526.1" fill="#00FF00" fill-opacity="0.088"/><polygon points="476.1,439.5 556.9,420.3 604.5,436.7 522.1,458.2" fill="#00FF00" fill-opacity="0.088"/><polygon points="348.5,556.6 443.5,528.4 451.3,591.7 358.7,623.7" fill="#00FF00" fill-opacity="0.088"/><polygon points="443.5,528.4 488.0,552.5 495.4,619.0 451.3,591.7" fill="#00FF00" fill-opacity="0.088"/><polygon points="358.7,623.7 451.3,591.7 495.4,619.0 400.2,655.0" fill="#00FF00" fill-opacity="0.088"/><polygon points="348.5,556.6 390.2,584.3 400.2,655.0 358.7,623.7" fill="#00FF00" fill-opacity="0.088"/><polygon points="390.2,584.3 488.0,552.5 495.4,619.0 400.2,655.0" fill="#00FF00" fill-opacity="0.088"/><polygon points="348.5,556.6 443.5,528.4 488.0,552.5 390.2,584.3" fill="#00FF00" fill-opacity="0.088"/><polygon points="335.6,472.9 433.8,449.6 442.0,515.9 346.4,543.4" fill="#00FF00" fill-opacity="0.088"/><polygon points="433.8,449.6 478.8,469.5 486.6,539.3 442.0,515.9" fill="#00FF00" fill-opacity="0.088"/><polygon points="346.4,543.4 442.0,515.9 486.6,539.3 388.2,570.3" fill="#00FF00" fill-opacity="0.088"/><polygon points="335.6,472.9 377.7,495.8 388.2,570.3 346.4,543.4" fill="#00FF00" fill-opacity="0.088"/><polygon points="377.7,495.8 478.8,469.5 486.6,539.3 388.2,570.3" fill="#00FF00" fill-opacity="0.088"/><polygon points="335.6,472.9 433.8,449.6 478.8,469.5 377.7,495.8" fill="#00FF00" fill-opacity="0.088"/>
<g transform="translate(-88,-70)">
<g id="robot">
<polygon points="703,240 736,243 764,390 718,394" fill="url(#gTubeU)"/>
<path d="M717.500 391 L768.500 387 L771 397 Q746 406 720 405 Z" fill="url(#gCollar)"/>
<ellipse cx="716.500" cy="421" rx="6.500" ry="19" fill="#4573A3"/>
<path d="M719 402 Q745 405 771 396 Q775 418 762 441 Q742 448 724 443 Q711 425 719 402 Z" fill="#2B2B2B"/>
<path d="M722 412 L740 430 L768 402" fill="none" stroke="#8A8A8A" stroke-width="1" stroke-opacity=".7"/>
<ellipse cx="686" cy="207" rx="11.500" ry="21" transform="rotate(14 686 207)" fill="#4573A3"/>
<circle cx="698" cy="206" r="21" fill="#3B3B3B"/>
<circle cx="725" cy="212" r="24" fill="url(#gJoint)"/>
<path d="M703 187 Q699 205 706 222" fill="none" stroke="#1E1E1E" stroke-width="1.500"/>
<polygon points="686,214 700,222 712,236 700,238 690,232" fill="#2A2A2A"/>
<polygon points="701.500,224.500 728,241.500 640,369 610,350" fill="url(#gTubeF)"/>
<polygon points="698.500,215 743.500,238 737.500,246.500 728,241.500 701.500,224.500 697,221.500" fill="url(#gCollar2)"/>
<path d="M699 214.300 L744.300 237.600" stroke="#121212" stroke-width="1.800"/>
<polygon points="612.500,347 643,367.500 637.500,377 606.500,355" fill="#1C1C1C"/>
<ellipse cx="603" cy="377" rx="24" ry="20" fill="#383838"/>
<circle cx="617.500" cy="383.500" r="20.500" fill="#4877A8"/>
<circle cx="619" cy="384" r="15" fill="none" stroke="#6C95BE" stroke-width="1" stroke-opacity=".8"/>
<path d="M614 376 h9 v12 h-9 z" fill="none" stroke="#3E6A98" stroke-width="2"/>
<polygon points="556,362 578,358 601,361 601,392 578,396 560,398 547,385" fill="#333333"/>
<path d="M574 360 Q568 378 575 396" fill="none" stroke="#6A6A6A" stroke-width="1" stroke-opacity=".8"/>
<polygon points="547,385 556,374 562,392" fill="#4A4A4A"/>
<ellipse cx="546" cy="440" rx="36" ry="19.500" fill="#FBF3CE"/>
<rect x="518" y="372" width="44" height="40" fill="url(#gCylH)"/>
<path d="M516 368 Q516 358 536 358 Q556 358 556 366 L556 376 Q536 386 518 382 Z" fill="#4A79AA"/>
<ellipse cx="536" cy="365" rx="17" ry="5.500" fill="#5D8ABA"/>
<rect x="520" y="409" width="41.500" height="3" fill="#101010"/>
<rect x="521" y="412" width="41" height="16" fill="url(#gCylS)"/>
<rect x="545" y="415" width="10" height="6" rx="1" fill="#B8B8B8" stroke="#555" stroke-width=".8"/>
<path d="M520 428 L571 428 L571 437 Q546 446 520 438 Z" fill="#2D3120"/>
<path d="M521 432 Q546 440 571 431" fill="none" stroke="#5A5A30" stroke-width="1" stroke-opacity=".8"/>
<polygon points="521,447.500 528,441 536,447.500" fill="#1E8E1E"/><polygon points="547,447 556,440.500 565,446.500" fill="#1E8E1E"/>
</g>
<g id="ghost">
<polygon points="783,396 902,267 938,310 815,428" fill="#C8A77C"/>
<ellipse cx="747" cy="448.500" rx="21.500" ry="25" fill="#C9A67B" fill-opacity=".86"/>
<path d="M727 436 Q733 424 747 423.500 L747 437 Z" fill="#7A5222" fill-opacity=".55"/>
<path d="M747 418 L762 412 L762 462 L747 452 Z" fill="#7C5120"/>
<path d="M747 418 Q742 436 747 452" fill="none" stroke="#5E3C14" stroke-width="1"/>
<path d="M758.500 404 Q759 396 786 395.500 Q812.500 396 813 404 L813.500 464 Q786 473 759.500 465 Z" fill="#70481A"/>
<path d="M758.500 404 Q759 396 786 395.500 Q812.500 396 813 404 L813 412 Q786 420 758.500 412 Z" fill="#8E5C1E"/>
<path d="M796 420 Q808 424 806 440 Q800 452 794 446 Q799 434 796 420 Z" fill="#A8641A" fill-opacity=".85"/>
<path d="M759.500 465 Q786 474 813.500 464 L822.500 491 Q823 500 790 501.500 Q757 500.500 756.500 492 Z" fill="#96642D"/>
<path d="M759.500 465 Q770 469.500 786 470 L798 501 Q757 502 756.500 492 Z" fill="#6FA016" fill-opacity=".42"/>
<path d="M759.500 465 Q786 474 813.500 464" fill="none" stroke="#4E2E0A" stroke-width="2" stroke-opacity=".75"/>
<path d="M757 492 Q790 503 822 491" fill="none" stroke="#7A4E1C" stroke-width="1.200" stroke-opacity=".7"/>
<polygon points="783,492 787,478 791,492" fill="#5E3E12" fill-opacity=".7"/>
<rect x="930" y="261" width="43" height="46" rx="5" fill="#C8A77C"/>
<circle cx="923" cy="286" r="27.500" fill="#C8A77C" stroke="#B38B5B" stroke-width="1"/>
<path d="M946 262 A10 25 0 0 1 946 308" fill="none" stroke="#E9DBC6" stroke-width="1.200" stroke-opacity=".8"/>
<polygon points="972,266.500 1140,254.500 1140,291.500 972,300.500" fill="#C8A77C"/>
<rect x="1136.500" y="253" width="46" height="43.500" rx="4" fill="#BC9868"/>
<ellipse cx="1161.500" cy="272" rx="19" ry="20" fill="#C8A77C" stroke="#AD8757" stroke-width="1"/>
<path d="M1150 254 A9 20 0 0 1 1150 292" fill="none" stroke="#AD8757" stroke-width="1"/>
<rect x="1180" y="256" width="16" height="40" fill="#C8A77C"/>
<path d="M1193 258 Q1193 250 1214 249.500 Q1235 251 1234.500 260 L1234.500 322 L1193 322 Z" fill="#C8A77C"/>
<path d="M1196 253 Q1214 246 1232 255 Q1226 262 1210 259" fill="none" stroke="#B89263" stroke-width="1"/>
<path d="M1187 323 L1232 323 L1228 334 Q1208 341 1186 336 Z" fill="#C49A62"/>
<path d="M1186 328 Q1208 334 1230 328" fill="none" stroke="#AD8757" stroke-width="1.200"/>
<polygon points="1197,342 1207,334 1217,342" fill="#E4CDB0" fill-opacity=".8"/>
</g>
<g fill="none">
<circle cx="924" cy="602" r="167" stroke="#F2E878" stroke-width="1.600" stroke-opacity=".6"/>
<circle cx="924.500" cy="600.500" r="110.300" stroke="#6F6F6F" stroke-width="1.700"/>
<path d="M875.800 545 L1028.500 593.400" stroke="#DB4A2A" stroke-width="5.500" stroke-linecap="round"/>
<circle cx="1027" cy="593" r="2.800" fill="#FF3030"/>
<path d="M941 491 A110.700 68 103.800 0 0 888 706" stroke="#FF0000" stroke-width="2.600"/>
<path d="M887.600 496 A111 64 69.300 0 1 966 704" stroke="#00FF00" stroke-width="2.600"/>
<path d="M812 603 A111.200 46 -0.800 0 0 1034.400 600" stroke="#0000FF" stroke-width="2.600"/>
</g>
<g>
<rect x="1217.500" y="301.500" width="16" height="26" fill="#E0523A" fill-opacity=".75"/>
<polygon points="1223,306 1247.500,304 1247.500,329 1223,331" fill="#30F030" fill-opacity=".62"/>
<polygon points="1199,341 1211,335 1223,341 1211,349" fill="#FFFFFF" fill-opacity=".75"/>
<path d="M1211 340.500 L1246 333.500" stroke="#00E000" stroke-width="1.800"/>
<circle cx="1247.500" cy="333.500" r="6.500" fill="#00E400"/>
<path d="M1211 340.500 L1286 350" stroke="#FF0000" stroke-width="1.800"/>
<polygon points="1302,350.500 1285,343 1285,356.500" fill="#FF0000"/>
<path d="M1211 340.500 L1217.300 256" stroke="#2A2AD8" stroke-width="1.800"/>
<polygon points="1217.400,241 1211.300,256.500 1223.500,256.500" fill="#2626E0"/>
<polygon points="1128.300,333 1143,327.500 1144,339.500" fill="#FF0000"/>
<path d="M1160 350.500 L1166 343.500 A7.300 7.300 0 1 1 1166 357.500 Z" fill="#00E400"/>
<polygon points="1197.500,420 1209.800,420 1203.300,434.500" fill="#0000FF"/>
</g>
</g></svg>
<!-- toolbar -->
<div class="btn on" style="left:1152px;width:118px"><svg style="left:13px;top:7px" width="34" height="34" viewBox="0 0 34 34" fill="none" stroke="#11222C" stroke-width="2.2" stroke-linecap="round"><circle cx="17.5" cy="18.5" r="6.3"/><path d="M19.5 5.6 A13 13 0 1 1 5.2 15.5"/><circle cx="8.2" cy="7.5" r="2.6"/></svg><span style="left:55px">Orbit</span></div>
<div class="btn" style="left:1280px;width:108px"><svg style="left:19px;top:11px" width="24" height="26" viewBox="0 0 24 26" fill="none" stroke="#8E9090" stroke-width="1.6" stroke-linecap="round" stroke-linejoin="round"><path d="M7.5 14.5V5.2a1.7 1.7 0 0 1 3.4 0V12M10.9 11.5V3.2a1.7 1.7 0 0 1 3.4 0V12M14.3 11.8V4.6a1.7 1.7 0 0 1 3.4 0v8M17.7 12.5V8a1.6 1.6 0 0 1 3.2 0v8.2c0 4.6-2.6 8-7 8-3.6 0-5.6-1.6-7.4-4.6L3.4 14.6c-.8-1.5 1-2.8 2.2-1.5l1.9 2.6"/></svg><span style="left:55px">Pan</span></div>
<div class="btn on" style="left:1398px;width:130px"><svg style="left:13px;top:6px" width="34" height="36" viewBox="0 0 34 36" fill="none" stroke="#11222C" stroke-width="1.7" stroke-linecap="round" stroke-linejoin="round"><path d="M21.3 19.7C20.8 27 19.3 32 17.5 32c-2.2 0-4-6.5-4-14.5S15.300 3 17.500 3c1.200 0 2.300 2 3 5.200"/><path d="M17.8 6.600l2.900 1.800 1.300-3.100"/><path d="M15.400 13.800C8.600 14.200 3.500 15.700 3.500 17.500c0 2.200 6.300 4 14 4s14-1.800 14-4c0-1.200-1.900-2.300-5-3"/><path d="M6.900 22.300l-1.800-2.900-3 1.500" transform="translate(1.500,-1)"/></svg><span style="left:56px">Rotate</span></div>
<div class="btn" style="left:1538px;width:120px"><svg style="left:17px;top:11px" width="26" height="26" viewBox="0 0 26 26" fill="none" stroke="#8E9090" stroke-width="1.7" stroke-linecap="round" stroke-linejoin="round"><path d="M13 2v9M13 15v9M2 13h9M15 13h9M9.800 5.200L13 2l3.200 3.200M9.800 20.800L13 24l3.200-3.200M5.200 9.800L2 13l3.200 3.200M20.800 9.800L24 13l-3.200 3.200"/></svg><span style="left:55px">Move</span></div>
<div class="btn" style="left:1668px;width:49px;height:49px"><span style="left:0;width:45px;text-align:center;font-size:20px;top:11px">?</span></div>
<!-- show preview -->
<div style="position:absolute;left:1405px;top:857px;font-size:16px;line-height:18px;color:#11222C">Show Preview</div>
<div style="position:absolute;left:1515px;top:848px;width:55px;height:35px;border-radius:18px;background:#3F7399"><div style="position:absolute;left:25px;top:5px;width:25px;height:25px;border-radius:13px;background:#fff"></div></div>
<!-- axis gizmo -->
<svg class="ic" style="left:1615px;top:775px" width="110" height="120" viewBox="1703 845 110 120">
<circle cx="1718.400" cy="898" r="7.2" fill="#fff" stroke="#EBC3C3" stroke-width="1"/>
<circle cx="1783.800" cy="896.800" r="7.7" fill="#10548F"/>
<circle cx="1753" cy="951.900" r="7.7" fill="#3F7C15"/>
<path d="M1753 908.300V866" stroke="#68CE1F" stroke-width="2.6"/>
<path d="M1753 908.300L1723 918" stroke="#1E8EEB" stroke-width="2.6"/>
<path d="M1753 908.300L1786.700 917" stroke="#EE3A43" stroke-width="2.6"/>
<circle cx="1753" cy="865" r="10" fill="#68CE1F"/><circle cx="1786.700" cy="917" r="10" fill="#EE3A43"/><circle cx="1723" cy="918" r="10" fill="#1E8EEB"/>
<g font-family="Liberation Sans,sans-serif" font-size="15.500" fill="#151515" stroke="#151515" stroke-width=".35" text-anchor="middle"><text x="1753" y="869.500">Y</text><text x="1786.700" y="921.500">X</text><text x="1723" y="922.500">Z</text></g>
</svg>
</div>
<div id="head">
<svg class="ic" style="left:799px;top:22px" width="26" height="24" viewBox="0 0 26 24" fill="none" stroke="#11222C" stroke-width="1.8" stroke-linejoin="round"><path d="M2 20.500V3.500h6.500l2.200 2.600h8.800v3.400"/><path d="M2 20.500l3.400-11h18.100l-3.400 11z"/></svg>
<div style="position:absolute;left:836px;top:13px;font-size:16px;line-height:20px;letter-spacing:.25px;color:#8B9094">Program name</div>
<div style="position:absolute;left:836px;top:36px;font-size:20px;line-height:24px;letter-spacing:.25px;color:#0C1A22;-webkit-text-stroke:.3px #0C1A22">My Program</div>
</div>
<div id="left">
<svg class="ic" style="left:32px;top:28px" width="24" height="20" viewBox="0 0 24 20" stroke="#11303E" stroke-width="2.2" stroke-linecap="round"><path d="M1.500 1.700h21M1.500 10h21M1.500 18.300h21"/></svg>
<div class="nav" style="top:110px"><svg width="26" height="26" viewBox="0 0 26 26" fill="none" stroke="#11303E" stroke-width="2.2"><rect x="1.100" y="1.100" width="9" height="9"/><rect x="15.900" y="1.100" width="9" height="9"/><rect x="1.100" y="15.900" width="9" height="9"/><rect x="15.900" y="15.900" width="9" height="9"/></svg><div style="margin-top:14px">Application</div></div>
<div class="nav" style="top:218px"><svg width="26" height="22" viewBox="0 0 26 22" fill="none" stroke="#11303E" stroke-width="2"><rect x="1" y="1" width="24" height="20" rx="1.500"/><path d="M4.500 5.500h1.600M8 5.500h1.600" stroke-width="2.200"/></svg><div style="margin-top:16px">Program</div></div>
<div class="nav" style="top:313px"><div style="width:45px;height:45px;margin:0 auto;position:relative;left:-.5px;background:#C3D6E5;border-radius:5px;padding-top:7px"><svg width="28" height="30" viewBox="0 0 28 30" fill="none" stroke="#3F7299" stroke-width="2" stroke-linejoin="round"><path d="M14 1.500L26 8v13.500L14 28.500 2 21.500V8z"/><path d="M2 8l12 6.500L26 8M14 14.500v14"/></svg></div><div style="margin-top:5px;font-weight:bold">3D</div></div>
<div class="nav" style="top:428px"><svg width="28" height="27" viewBox="0 0 28 27" fill="none" stroke="#11303E" stroke-width="2.300" stroke-linecap="round"><circle cx="14" cy="9.500" r="7.300"/><path d="M2 25.500c2-5 6.500-8.500 12-8.700 5.500.2 10 3.700 12 8.700" /></svg><div style="margin-top:14px">Operator</div></div>
<div class="nav" style="top:535px"><svg width="27" height="27" viewBox="0 0 27 27" fill="none" stroke="#11303E" stroke-width="2"><circle cx="13.500" cy="13.500" r="12"/><path d="M11.500 11.800h2.300v7.200M13.500 7.500v.2" stroke-width="2.200" stroke-linecap="round"/></svg><div style="margin-top:13px">Insights</div></div>
</div>
<div id="right">
<svg class="ic" style="left:28px;top:38px" width="30" height="24" viewBox="0 0 30 24" fill="none" stroke="#0B2A38" stroke-width="2" stroke-linejoin="round" stroke-linecap="round"><path d="M26.800 3.900H14.600L7.200 5 2.900 9.400Q3.800 12 7.500 12.200 9.600 12 11.200 10.200L12.600 9.500Q14.500 9.200 16.600 8.900 17.400 10.200 17 11.300L14.900 14.600Q13.200 17.500 14.900 20.500L18.300 15.700Q19.600 14.500 21.600 14.200 23.400 13.600 23.800 11.600L26.800 11.500Z"/><path d="M4.200 10.200L8.300 7.900Q12 6.900 14.800 7.400 16.800 8 17 9.500"/></svg>
<div class="rnav" style="top:85px">b3 ec<br>84 d9</div>
<svg class="ic" style="left:29px;top:167px" width="28" height="28" viewBox="0 0 28 28" fill="none" stroke="#11303E" stroke-width="1.700" stroke-linecap="round" stroke-linejoin="round"><circle cx="8.500" cy="16" r="1.700" fill="#11303E"/><path d="M8.500 11.500V3M6 5.500L8.500 3 11 5.500M12 18.500l8 5M16.500 24.200l3.500-.7-.7-3.500M12.500 13l3.800-2.200M13.500 10.200l2.800.6-.7 2.700"/></svg>
<div class="rnav" style="top:208px">Visualizable<br>Frames</div>
<svg class="ic" style="left:30px;top:290px" width="26" height="26" viewBox="0 0 26 26" fill="none" stroke="#11303E" stroke-width="2" stroke-linecap="round" stroke-linejoin="round"><path d="M13 2v9M13 15v9M2 13h9M15 13h9M9.800 5.200L13 2l3.200 3.200M9.800 20.800L13 24l3.200-3.200M5.200 9.800L2 13l3.200 3.200M20.800 9.800L24 13l-3.200 3.200"/></svg>
<div class="rnav" style="top:330px">Move</div>
<svg class="ic" style="left:27px;top:399px" width="32" height="22" viewBox="0 0 32 22" stroke="#11303E" stroke-width="2.300" stroke-linecap="round"><path d="M2 2.500h3.500M10 2.500h20M2 11h3.500M10 11h20M2 19.500h3.500M10 19.500h20"/></svg>
<div class="rnav" style="top:436px">Program<br>structure</div>
<div class="rnav" style="top:517px;font-size:21px;line-height:26px;letter-spacing:-.5px">{<i style="font-size:17px">x</i>}</div>
<div class="rnav" style="top:559px">Global<br>Variables</div>
<svg class="ic" style="left:28px;top:639px" width="30" height="32" viewBox="0 0 30 32" fill="none" stroke="#11303E" stroke-linejoin="round"><path d="M15 1.800L27.500 8.800v14.400L15 30.200 2.500 23.200V8.800z" stroke-width="2.300"/><path d="M15 8.500l6.800 3.800v7.400L15 23.500l-6.800-3.800v-7.400z" stroke-width="1.200"/><path d="M8.200 12.300l6.800 3.700 6.800-3.700M15 16v7.500" stroke-width="1.200"/></svg>
<div class="rnav" style="top:681px">Studio</div>
</div>
<div id="bot">
<div style="position:absolute;left:20px;top:11px;width:60px;height:60px;border-radius:30px;border:5px solid #fff;background:#1C3B4C"><svg style="position:absolute;left:11px;top:10px" width="28" height="28" viewBox="0 0 28 28" fill="none" stroke="#F2F5F6" stroke-width="1.700" stroke-linecap="round"><path d="M14 3.500v10.500"/><path d="M8.500 6.800a10.500 10.500 0 1 0 11 0"/></svg></div>
<div style="position:absolute;left:90px;top:17px;font-size:16px;line-height:20px;color:#A9C6D8">Robot State</div>
<div style="position:absolute;left:90px;top:38px;font-size:22px;line-height:26px;font-weight:bold;color:#fff">Off</div>
<div class="cbtn" style="left:780px"><svg width="60" height="60" viewBox="0 0 60 60"><circle cx="30" cy="30" r="11.500" fill="none" stroke="#fff" stroke-width="2.200"/><circle cx="30" cy="30" r="7" fill="#fff"/></svg></div>
<div class="cbtn" style="left:880px"><svg width="60" height="60" viewBox="0 0 60 60"><path d="M23.500 19.500L43 30 23.500 40.500z" fill="#1C3B4C" stroke="#1C3B4C" stroke-width="3" stroke-linejoin="round"/></svg></div>
<div class="cbtn" style="left:980px"><svg width="60" height="60" viewBox="0 0 60 60"><path d="M20 20.500L36.500 30 20 39.500z" fill="#1C3B4C" stroke="#1C3B4C" stroke-width="2" stroke-linejoin="round"/><rect x="37.500" y="19" width="3" height="22" fill="#1C3B4C"/></svg></div>
<div class="cbtn" style="left:1080px"><svg width="60" height="60" viewBox="0 0 60 60"><rect x="19" y="19" width="22" height="22" fill="#1C3B4C"/></svg></div>
<div style="position:absolute;left:1703px;top:12px;width:197px;height:57px;border-radius:29px;background:#002B3A">
<div style="position:absolute;left:6px;top:6px;width:45px;height:45px;border-radius:23px;background:#00222F"><svg width="45" height="45" viewBox="0 0 45 45" stroke="#E8E8E8" stroke-width="1.800"><path d="M12.500 22.500h20"/></svg></div>
<div style="position:absolute;left:146px;top:6px;width:45px;height:45px;border-radius:23px;background:#00222F"><svg width="45" height="45" viewBox="0 0 45 45" stroke="#E8E8E8" stroke-width="1.800"><path d="M12.500 22.500h20M22.500 12.500v20"/></svg></div>
<div style="position:absolute;left:51px;top:6px;width:95px;text-align:center;font-size:16px;line-height:20px;color:#A9C6D8">Speed</div>
<div style="position:absolute;left:51px;top:27px;width:95px;text-align:center;font-size:20px;line-height:24px;font-weight:bold;color:#fff">100 %</div>
</div>
</div>
</div></body></html>
